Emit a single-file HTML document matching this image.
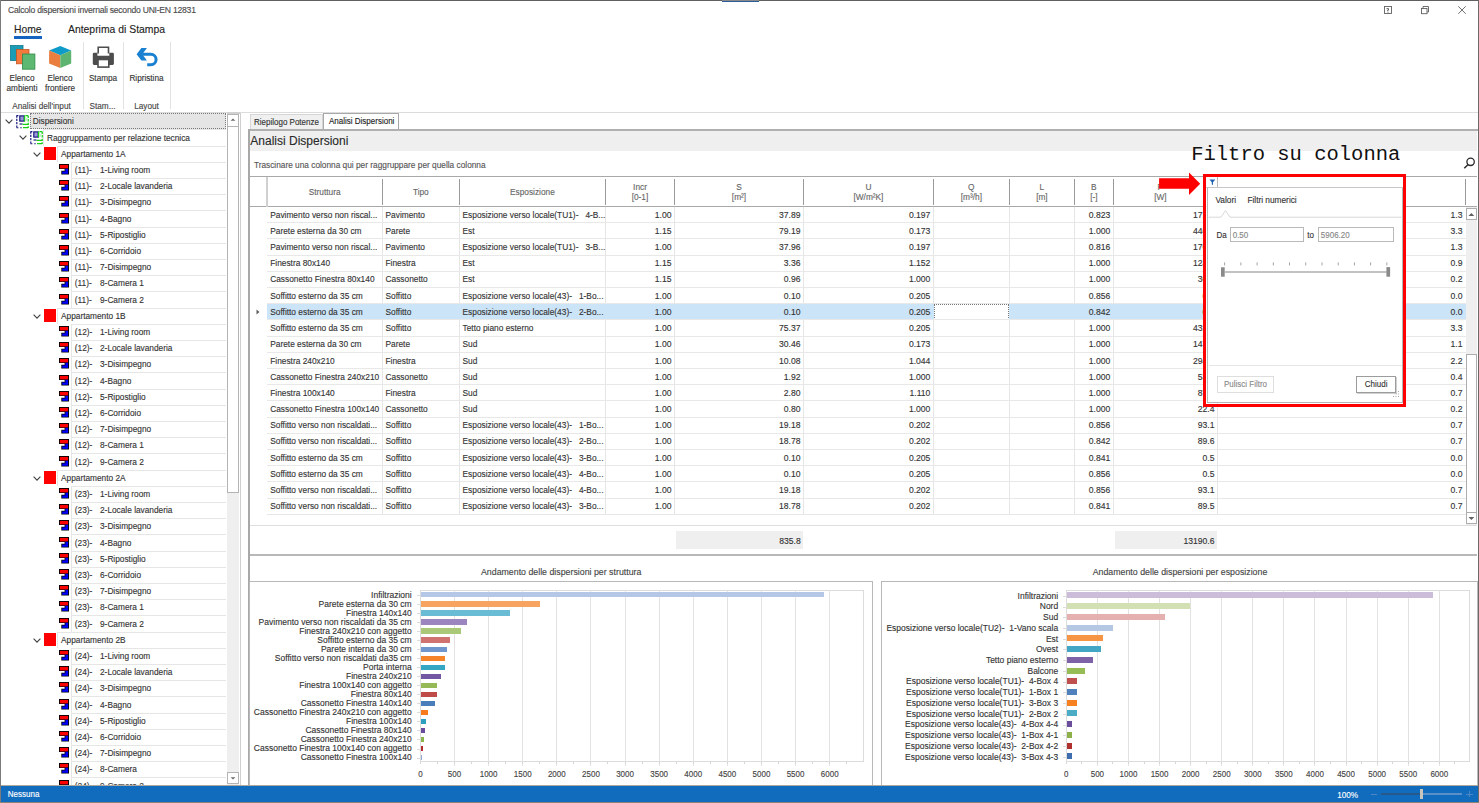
<!DOCTYPE html>
<html><head><meta charset="utf-8"><style>
html,body{margin:0;padding:0;}
body{width:1479px;height:803px;position:relative;overflow:hidden;background:#fff;font-family:"Liberation Sans",sans-serif;}
div{position:absolute;}
.t{white-space:pre;-webkit-text-stroke:0.12px currentColor;}
</style></head><body>
<div style="left:0px;top:0px;width:1479px;height:1px;background:#5f5f5f"></div>
<div style="left:0px;top:0px;width:1px;height:803px;background:#7b7b7b"></div>
<div style="left:1478px;top:0px;width:1px;height:803px;background:#6a6a6a"></div>
<div style="left:0px;top:802px;width:1479px;height:1px;background:#8d8478"></div>
<div style="left:722px;top:0px;width:37px;height:1px;background:#8a8a8a"></div>
<div style="left:722px;top:1px;width:37px;height:1px;background:#2b5d9b"></div>
<div class="t" style="left:8px;top:5px;font-size:8.6px;line-height:10.75px;color:#4a4a4a;font-family:'Liberation Sans';letter-spacing:-0.24px;transform:scaleY(1.1);transform-origin:0 8px;">Calcolo dispersioni invernali secondo UNI-EN 12831</div>
<svg style="position:absolute;left:0;top:0" width="1479" height="20"><rect x="1384.5" y="6.5" width="7" height="7" fill="none" stroke="#606060" stroke-width="0.9"/><path d="M386.5 8.6 h2 v1.6 h-1 v1" transform="translate(1000,0)" fill="none" stroke="#555" stroke-width="0.9"/><rect x="1387.6" y="11.8" width="0.9" height="0.9" fill="#555"/><rect x="1421.5" y="8.5" width="5.5" height="5.2" fill="none" stroke="#606060" stroke-width="0.9"/><path d="M1423 8.5 V6.5 H1428.5 V12 H1427" fill="none" stroke="#606060" stroke-width="0.9"/><path d="M1458.3 6.3 L1465.7 13.8 M1465.7 6.3 L1458.3 13.8" stroke="#606060" stroke-width="0.9"/></svg>
<div class="t" style="left:14px;top:24px;font-size:10.3px;line-height:12.88px;color:#222;font-family:'Liberation Sans';">Home</div>
<div style="left:14px;top:36px;width:28px;height:3px;background:#1565c0"></div>
<div class="t" style="left:68px;top:23px;font-size:10.4px;line-height:13.0px;color:#222;font-family:'Liberation Sans';">Anteprima di Stampa</div>
<svg style="position:absolute;left:0;top:0" width="180" height="75"><rect x="10.5" y="45.5" width="12.5" height="15" fill="#1b9cb6" stroke="#15798f" stroke-width="0.8"/><rect x="16.5" y="49.5" width="12.5" height="14.3" fill="#f47b3d" stroke="#c9561f" stroke-width="0.8"/><rect x="22.5" y="54" width="12.4" height="15.2" fill="#5db971" stroke="#2f8a4a" stroke-width="0.8"/><polygon points="60.3,46.1 71.2,50.6 60.3,55.2 49.1,50.6" fill="#0f9bc9"/><polygon points="49.1,50.6 60.3,55.2 60.3,68.1 49.1,63.6" fill="#e97e3e"/><polygon points="71.2,50.6 60.3,55.2 60.3,68.1 71.2,63.6" fill="#5db470"/><path d="M98.2 53.5 V47.3 H108.5 V53.5" fill="none" stroke="#4d4d4d" stroke-width="1.6"/><path d="M94 52.7 H97.4 V55.7 H109.3 V52.7 H112.7 Q113.9 52.7 113.9 54 V63.6 Q113.9 64.9 112.7 64.9 H94 Q92.8 64.9 92.8 63.6 V54 Q92.8 52.7 94 52.7 Z" fill="#4d4d4d"/><rect x="98" y="59.5" width="10.8" height="7.6" fill="#fff" stroke="#4d4d4d" stroke-width="1.6"/><polygon points="136.6,54.2 141.4,48.1 146.9,48.1 142.3,54.2 146.9,60.6 141.4,60.6" fill="#1a80d0"/><path d="M140 54.2 H150.8 A5.3 5.3 0 0 1 150.8 64.8 H147.2" fill="none" stroke="#1a80d0" stroke-width="3"/></svg>
<div class="t" style="left:-8.0px;width:60px;text-align:center;top:74px;font-size:8.2px;line-height:10.25px;color:#333;font-family:'Liberation Sans';transform:scaleY(1.1);transform-origin:0 7px;">Elenco</div>
<div class="t" style="left:-8.0px;width:60px;text-align:center;top:84px;font-size:8.2px;line-height:10.25px;color:#333;font-family:'Liberation Sans';transform:scaleY(1.1);transform-origin:0 7px;">ambienti</div>
<div class="t" style="left:30.0px;width:60px;text-align:center;top:74px;font-size:8.2px;line-height:10.25px;color:#333;font-family:'Liberation Sans';transform:scaleY(1.1);transform-origin:0 7px;">Elenco</div>
<div class="t" style="left:30.0px;width:60px;text-align:center;top:84px;font-size:8.2px;line-height:10.25px;color:#333;font-family:'Liberation Sans';transform:scaleY(1.1);transform-origin:0 7px;">frontiere</div>
<div class="t" style="left:73.0px;width:60px;text-align:center;top:74px;font-size:8.2px;line-height:10.25px;color:#333;font-family:'Liberation Sans';transform:scaleY(1.1);transform-origin:0 7px;">Stampa</div>
<div class="t" style="left:116.5px;width:60px;text-align:center;top:74px;font-size:8.2px;line-height:10.25px;color:#333;font-family:'Liberation Sans';transform:scaleY(1.1);transform-origin:0 7px;">Ripristina</div>
<div class="t" style="left:-8.5px;width:100px;text-align:center;top:102px;font-size:8.2px;line-height:10.25px;color:#444;font-family:'Liberation Sans';transform:scaleY(1.1);transform-origin:0 7px;">Analisi dell'input</div>
<div class="t" style="left:72.5px;width:60px;text-align:center;top:102px;font-size:8.2px;line-height:10.25px;color:#444;font-family:'Liberation Sans';transform:scaleY(1.1);transform-origin:0 7px;">Stam...</div>
<div class="t" style="left:116.5px;width:60px;text-align:center;top:102px;font-size:8.2px;line-height:10.25px;color:#444;font-family:'Liberation Sans';transform:scaleY(1.1);transform-origin:0 7px;">Layout</div>
<div style="left:83px;top:42px;width:1px;height:67px;background:#e2e2e2"></div>
<div style="left:123px;top:42px;width:1px;height:67px;background:#e2e2e2"></div>
<div style="left:170px;top:42px;width:1px;height:67px;background:#e2e2e2"></div>
<div style="left:1px;top:112px;width:1477px;height:1px;background:#dcdcdc"></div>
<div style="left:1px;top:113px;width:226px;height:672px;overflow:hidden">
<svg style="position:absolute;left:3.8px;top:6.2px" width="9" height="6"><path d="M0.6 0.6 L4 4.2 L7.4 0.6" fill="none" stroke="#404040" stroke-width="1.1"/></svg>
<svg style="position:absolute;left:15px;top:2.2px" width="14" height="14"><path d="M0.8 0.5 V13" stroke="#1b1b80" stroke-width="1.2" stroke-dasharray="2.2 1.1"/><path d="M0.5 0.6 H2.4 M0.5 12.7 H2.4" stroke="#1b1b80" stroke-width="1.1"/><rect x="3.8" y="0.9" width="4.4" height="5.2" fill="#9a9ad8" stroke="#1b1b80" stroke-width="1.2"/><path d="M3.5 9 H6.5" stroke="#1b1b80" stroke-width="1.2"/><path d="M4 12.7 H6" stroke="#5050a0" stroke-width="1.1"/><path d="M8.6 0.5 V6.5" stroke="#16d016" stroke-width="1.3"/><path d="M12.2 0.5 V13" stroke="#16d016" stroke-width="1.3" stroke-dasharray="2.4 1.2"/><path d="M9.5 0.6 H12 M6.5 9.3 H12 M7 12.7 H12" stroke="#16d016" stroke-width="1.2"/><rect x="9.5" y="3" width="2" height="3" fill="#c8f0c8"/></svg>
<div style="left:29px;top:0.2px;width:196px;height:15.5px;background:#e5e5e5;border:1px dotted #7a7a7a;box-sizing:border-box"></div>
<div class="t" style="left:31.7px;top:3px;font-size:8.3px;line-height:10.38px;color:#333;font-family:'Liberation Sans';transform:scaleY(1.1);transform-origin:0 8px;">Dispersioni</div>
<div style="left:42px;top:16.4px;width:183px;height:16.2px;border-top:1px solid #e6e6e6;border-left:1px solid #e6e6e6;box-sizing:border-box"></div>
<svg style="position:absolute;left:17.7px;top:22.4px" width="9" height="6"><path d="M0.6 0.6 L4 4.2 L7.4 0.6" fill="none" stroke="#404040" stroke-width="1.1"/></svg>
<svg style="position:absolute;left:29px;top:18.4px" width="14" height="14"><path d="M0.8 0.5 V13" stroke="#1b1b80" stroke-width="1.2" stroke-dasharray="2.2 1.1"/><path d="M0.5 0.6 H2.4 M0.5 12.7 H2.4" stroke="#1b1b80" stroke-width="1.1"/><rect x="3.8" y="0.9" width="4.4" height="5.2" fill="#9a9ad8" stroke="#1b1b80" stroke-width="1.2"/><path d="M3.5 9 H6.5" stroke="#1b1b80" stroke-width="1.2"/><path d="M4 12.7 H6" stroke="#5050a0" stroke-width="1.1"/><path d="M8.6 0.5 V6.5" stroke="#16d016" stroke-width="1.3"/><path d="M12.2 0.5 V13" stroke="#16d016" stroke-width="1.3" stroke-dasharray="2.4 1.2"/><path d="M9.5 0.6 H12 M6.5 9.3 H12 M7 12.7 H12" stroke="#16d016" stroke-width="1.2"/><rect x="9.5" y="3" width="2" height="3" fill="#c8f0c8"/></svg>
<div class="t" style="left:46px;top:20px;font-size:8.3px;line-height:10.38px;color:#333;font-family:'Liberation Sans';transform:scaleY(1.1);transform-origin:0 8px;">Raggruppamento per relazione tecnica</div>
<div style="left:56px;top:32.6px;width:169px;height:16.2px;border-top:1px solid #e6e6e6;border-left:1px solid #e6e6e6;box-sizing:border-box"></div>
<svg style="position:absolute;left:31.7px;top:38.6px" width="9" height="6"><path d="M0.6 0.6 L4 4.2 L7.4 0.6" fill="none" stroke="#404040" stroke-width="1.1"/></svg>
<div style="left:43px;top:34.2px;width:12px;height:13px;background:#ff0000"></div>
<div class="t" style="left:60px;top:36px;font-size:8.3px;line-height:10.38px;color:#333;font-family:'Liberation Sans';transform:scaleY(1.1);transform-origin:0 8px;">Appartamento 1A</div>
<div style="left:70.4px;top:48.8px;width:154.6px;height:16.2px;border-top:1px solid #e6e6e6;border-left:1px solid #e6e6e6;box-sizing:border-box"></div>
<svg style="position:absolute;left:58px;top:51.0px" width="12" height="12"><path d="M0 0 H10 V10.6 H2.3 V6.8 H5.6 V4.9 H0 Z" fill="#000"/><rect x="0.9" y="0.9" width="8.2" height="3.5" fill="#ff0000"/><rect x="6.4" y="4.8" width="2.7" height="3" fill="#0000ff"/><rect x="3.2" y="7.5" width="5.9" height="2.3" fill="#0000ff"/></svg>
<div class="t" style="left:73.8px;top:52px;font-size:8.3px;line-height:10.38px;color:#333;font-family:'Liberation Sans';transform:scaleY(1.1);transform-origin:0 8px;">(11)-</div>
<div class="t" style="left:99px;top:52px;font-size:8.3px;line-height:10.38px;color:#333;font-family:'Liberation Sans';transform:scaleY(1.1);transform-origin:0 8px;">1-Living room</div>
<div style="left:70.4px;top:65.0px;width:154.6px;height:16.2px;border-top:1px solid #e6e6e6;border-left:1px solid #e6e6e6;box-sizing:border-box"></div>
<svg style="position:absolute;left:58px;top:67.2px" width="12" height="12"><path d="M0 0 H10 V10.6 H2.3 V6.8 H5.6 V4.9 H0 Z" fill="#000"/><rect x="0.9" y="0.9" width="8.2" height="3.5" fill="#ff0000"/><rect x="6.4" y="4.8" width="2.7" height="3" fill="#0000ff"/><rect x="3.2" y="7.5" width="5.9" height="2.3" fill="#0000ff"/></svg>
<div class="t" style="left:73.8px;top:68px;font-size:8.3px;line-height:10.38px;color:#333;font-family:'Liberation Sans';transform:scaleY(1.1);transform-origin:0 8px;">(11)-</div>
<div class="t" style="left:99px;top:68px;font-size:8.3px;line-height:10.38px;color:#333;font-family:'Liberation Sans';transform:scaleY(1.1);transform-origin:0 8px;">2-Locale lavanderia</div>
<div style="left:70.4px;top:81.2px;width:154.6px;height:16.2px;border-top:1px solid #e6e6e6;border-left:1px solid #e6e6e6;box-sizing:border-box"></div>
<svg style="position:absolute;left:58px;top:83.4px" width="12" height="12"><path d="M0 0 H10 V10.6 H2.3 V6.8 H5.6 V4.9 H0 Z" fill="#000"/><rect x="0.9" y="0.9" width="8.2" height="3.5" fill="#ff0000"/><rect x="6.4" y="4.8" width="2.7" height="3" fill="#0000ff"/><rect x="3.2" y="7.5" width="5.9" height="2.3" fill="#0000ff"/></svg>
<div class="t" style="left:73.8px;top:84px;font-size:8.3px;line-height:10.38px;color:#333;font-family:'Liberation Sans';transform:scaleY(1.1);transform-origin:0 8px;">(11)-</div>
<div class="t" style="left:99px;top:84px;font-size:8.3px;line-height:10.38px;color:#333;font-family:'Liberation Sans';transform:scaleY(1.1);transform-origin:0 8px;">3-Disimpegno</div>
<div style="left:70.4px;top:97.4px;width:154.6px;height:16.2px;border-top:1px solid #e6e6e6;border-left:1px solid #e6e6e6;box-sizing:border-box"></div>
<svg style="position:absolute;left:58px;top:99.6px" width="12" height="12"><path d="M0 0 H10 V10.6 H2.3 V6.8 H5.6 V4.9 H0 Z" fill="#000"/><rect x="0.9" y="0.9" width="8.2" height="3.5" fill="#ff0000"/><rect x="6.4" y="4.8" width="2.7" height="3" fill="#0000ff"/><rect x="3.2" y="7.5" width="5.9" height="2.3" fill="#0000ff"/></svg>
<div class="t" style="left:73.8px;top:101px;font-size:8.3px;line-height:10.38px;color:#333;font-family:'Liberation Sans';transform:scaleY(1.1);transform-origin:0 8px;">(11)-</div>
<div class="t" style="left:99px;top:101px;font-size:8.3px;line-height:10.38px;color:#333;font-family:'Liberation Sans';transform:scaleY(1.1);transform-origin:0 8px;">4-Bagno</div>
<div style="left:70.4px;top:113.6px;width:154.6px;height:16.2px;border-top:1px solid #e6e6e6;border-left:1px solid #e6e6e6;box-sizing:border-box"></div>
<svg style="position:absolute;left:58px;top:115.8px" width="12" height="12"><path d="M0 0 H10 V10.6 H2.3 V6.8 H5.6 V4.9 H0 Z" fill="#000"/><rect x="0.9" y="0.9" width="8.2" height="3.5" fill="#ff0000"/><rect x="6.4" y="4.8" width="2.7" height="3" fill="#0000ff"/><rect x="3.2" y="7.5" width="5.9" height="2.3" fill="#0000ff"/></svg>
<div class="t" style="left:73.8px;top:117px;font-size:8.3px;line-height:10.38px;color:#333;font-family:'Liberation Sans';transform:scaleY(1.1);transform-origin:0 8px;">(11)-</div>
<div class="t" style="left:99px;top:117px;font-size:8.3px;line-height:10.38px;color:#333;font-family:'Liberation Sans';transform:scaleY(1.1);transform-origin:0 8px;">5-Ripostiglio</div>
<div style="left:70.4px;top:129.8px;width:154.6px;height:16.2px;border-top:1px solid #e6e6e6;border-left:1px solid #e6e6e6;box-sizing:border-box"></div>
<svg style="position:absolute;left:58px;top:132.0px" width="12" height="12"><path d="M0 0 H10 V10.6 H2.3 V6.8 H5.6 V4.9 H0 Z" fill="#000"/><rect x="0.9" y="0.9" width="8.2" height="3.5" fill="#ff0000"/><rect x="6.4" y="4.8" width="2.7" height="3" fill="#0000ff"/><rect x="3.2" y="7.5" width="5.9" height="2.3" fill="#0000ff"/></svg>
<div class="t" style="left:73.8px;top:133px;font-size:8.3px;line-height:10.38px;color:#333;font-family:'Liberation Sans';transform:scaleY(1.1);transform-origin:0 8px;">(11)-</div>
<div class="t" style="left:99px;top:133px;font-size:8.3px;line-height:10.38px;color:#333;font-family:'Liberation Sans';transform:scaleY(1.1);transform-origin:0 8px;">6-Corridoio</div>
<div style="left:70.4px;top:146.0px;width:154.6px;height:16.2px;border-top:1px solid #e6e6e6;border-left:1px solid #e6e6e6;box-sizing:border-box"></div>
<svg style="position:absolute;left:58px;top:148.2px" width="12" height="12"><path d="M0 0 H10 V10.6 H2.3 V6.8 H5.6 V4.9 H0 Z" fill="#000"/><rect x="0.9" y="0.9" width="8.2" height="3.5" fill="#ff0000"/><rect x="6.4" y="4.8" width="2.7" height="3" fill="#0000ff"/><rect x="3.2" y="7.5" width="5.9" height="2.3" fill="#0000ff"/></svg>
<div class="t" style="left:73.8px;top:149px;font-size:8.3px;line-height:10.38px;color:#333;font-family:'Liberation Sans';transform:scaleY(1.1);transform-origin:0 8px;">(11)-</div>
<div class="t" style="left:99px;top:149px;font-size:8.3px;line-height:10.38px;color:#333;font-family:'Liberation Sans';transform:scaleY(1.1);transform-origin:0 8px;">7-Disimpegno</div>
<div style="left:70.4px;top:162.2px;width:154.6px;height:16.2px;border-top:1px solid #e6e6e6;border-left:1px solid #e6e6e6;box-sizing:border-box"></div>
<svg style="position:absolute;left:58px;top:164.4px" width="12" height="12"><path d="M0 0 H10 V10.6 H2.3 V6.8 H5.6 V4.9 H0 Z" fill="#000"/><rect x="0.9" y="0.9" width="8.2" height="3.5" fill="#ff0000"/><rect x="6.4" y="4.8" width="2.7" height="3" fill="#0000ff"/><rect x="3.2" y="7.5" width="5.9" height="2.3" fill="#0000ff"/></svg>
<div class="t" style="left:73.8px;top:165px;font-size:8.3px;line-height:10.38px;color:#333;font-family:'Liberation Sans';transform:scaleY(1.1);transform-origin:0 8px;">(11)-</div>
<div class="t" style="left:99px;top:165px;font-size:8.3px;line-height:10.38px;color:#333;font-family:'Liberation Sans';transform:scaleY(1.1);transform-origin:0 8px;">8-Camera 1</div>
<div style="left:70.4px;top:178.4px;width:154.6px;height:16.2px;border-top:1px solid #e6e6e6;border-left:1px solid #e6e6e6;box-sizing:border-box"></div>
<svg style="position:absolute;left:58px;top:180.6px" width="12" height="12"><path d="M0 0 H10 V10.6 H2.3 V6.8 H5.6 V4.9 H0 Z" fill="#000"/><rect x="0.9" y="0.9" width="8.2" height="3.5" fill="#ff0000"/><rect x="6.4" y="4.8" width="2.7" height="3" fill="#0000ff"/><rect x="3.2" y="7.5" width="5.9" height="2.3" fill="#0000ff"/></svg>
<div class="t" style="left:73.8px;top:182px;font-size:8.3px;line-height:10.38px;color:#333;font-family:'Liberation Sans';transform:scaleY(1.1);transform-origin:0 8px;">(11)-</div>
<div class="t" style="left:99px;top:182px;font-size:8.3px;line-height:10.38px;color:#333;font-family:'Liberation Sans';transform:scaleY(1.1);transform-origin:0 8px;">9-Camera 2</div>
<div style="left:56px;top:194.6px;width:169px;height:16.2px;border-top:1px solid #e6e6e6;border-left:1px solid #e6e6e6;box-sizing:border-box"></div>
<svg style="position:absolute;left:31.7px;top:200.6px" width="9" height="6"><path d="M0.6 0.6 L4 4.2 L7.4 0.6" fill="none" stroke="#404040" stroke-width="1.1"/></svg>
<div style="left:43px;top:196.2px;width:12px;height:13px;background:#ff0000"></div>
<div class="t" style="left:60px;top:198px;font-size:8.3px;line-height:10.38px;color:#333;font-family:'Liberation Sans';transform:scaleY(1.1);transform-origin:0 8px;">Appartamento 1B</div>
<div style="left:70.4px;top:210.8px;width:154.6px;height:16.2px;border-top:1px solid #e6e6e6;border-left:1px solid #e6e6e6;box-sizing:border-box"></div>
<svg style="position:absolute;left:58px;top:213.0px" width="12" height="12"><path d="M0 0 H10 V10.6 H2.3 V6.8 H5.6 V4.9 H0 Z" fill="#000"/><rect x="0.9" y="0.9" width="8.2" height="3.5" fill="#ff0000"/><rect x="6.4" y="4.8" width="2.7" height="3" fill="#0000ff"/><rect x="3.2" y="7.5" width="5.9" height="2.3" fill="#0000ff"/></svg>
<div class="t" style="left:73.8px;top:214px;font-size:8.3px;line-height:10.38px;color:#333;font-family:'Liberation Sans';transform:scaleY(1.1);transform-origin:0 8px;">(12)-</div>
<div class="t" style="left:99px;top:214px;font-size:8.3px;line-height:10.38px;color:#333;font-family:'Liberation Sans';transform:scaleY(1.1);transform-origin:0 8px;">1-Living room</div>
<div style="left:70.4px;top:227.0px;width:154.6px;height:16.2px;border-top:1px solid #e6e6e6;border-left:1px solid #e6e6e6;box-sizing:border-box"></div>
<svg style="position:absolute;left:58px;top:229.2px" width="12" height="12"><path d="M0 0 H10 V10.6 H2.3 V6.8 H5.6 V4.9 H0 Z" fill="#000"/><rect x="0.9" y="0.9" width="8.2" height="3.5" fill="#ff0000"/><rect x="6.4" y="4.8" width="2.7" height="3" fill="#0000ff"/><rect x="3.2" y="7.5" width="5.9" height="2.3" fill="#0000ff"/></svg>
<div class="t" style="left:73.8px;top:230px;font-size:8.3px;line-height:10.38px;color:#333;font-family:'Liberation Sans';transform:scaleY(1.1);transform-origin:0 8px;">(12)-</div>
<div class="t" style="left:99px;top:230px;font-size:8.3px;line-height:10.38px;color:#333;font-family:'Liberation Sans';transform:scaleY(1.1);transform-origin:0 8px;">2-Locale lavanderia</div>
<div style="left:70.4px;top:243.2px;width:154.6px;height:16.2px;border-top:1px solid #e6e6e6;border-left:1px solid #e6e6e6;box-sizing:border-box"></div>
<svg style="position:absolute;left:58px;top:245.4px" width="12" height="12"><path d="M0 0 H10 V10.6 H2.3 V6.8 H5.6 V4.9 H0 Z" fill="#000"/><rect x="0.9" y="0.9" width="8.2" height="3.5" fill="#ff0000"/><rect x="6.4" y="4.8" width="2.7" height="3" fill="#0000ff"/><rect x="3.2" y="7.5" width="5.9" height="2.3" fill="#0000ff"/></svg>
<div class="t" style="left:73.8px;top:246px;font-size:8.3px;line-height:10.38px;color:#333;font-family:'Liberation Sans';transform:scaleY(1.1);transform-origin:0 8px;">(12)-</div>
<div class="t" style="left:99px;top:246px;font-size:8.3px;line-height:10.38px;color:#333;font-family:'Liberation Sans';transform:scaleY(1.1);transform-origin:0 8px;">3-Disimpegno</div>
<div style="left:70.4px;top:259.4px;width:154.6px;height:16.2px;border-top:1px solid #e6e6e6;border-left:1px solid #e6e6e6;box-sizing:border-box"></div>
<svg style="position:absolute;left:58px;top:261.6px" width="12" height="12"><path d="M0 0 H10 V10.6 H2.3 V6.8 H5.6 V4.9 H0 Z" fill="#000"/><rect x="0.9" y="0.9" width="8.2" height="3.5" fill="#ff0000"/><rect x="6.4" y="4.8" width="2.7" height="3" fill="#0000ff"/><rect x="3.2" y="7.5" width="5.9" height="2.3" fill="#0000ff"/></svg>
<div class="t" style="left:73.8px;top:263px;font-size:8.3px;line-height:10.38px;color:#333;font-family:'Liberation Sans';transform:scaleY(1.1);transform-origin:0 8px;">(12)-</div>
<div class="t" style="left:99px;top:263px;font-size:8.3px;line-height:10.38px;color:#333;font-family:'Liberation Sans';transform:scaleY(1.1);transform-origin:0 8px;">4-Bagno</div>
<div style="left:70.4px;top:275.6px;width:154.6px;height:16.2px;border-top:1px solid #e6e6e6;border-left:1px solid #e6e6e6;box-sizing:border-box"></div>
<svg style="position:absolute;left:58px;top:277.8px" width="12" height="12"><path d="M0 0 H10 V10.6 H2.3 V6.8 H5.6 V4.9 H0 Z" fill="#000"/><rect x="0.9" y="0.9" width="8.2" height="3.5" fill="#ff0000"/><rect x="6.4" y="4.8" width="2.7" height="3" fill="#0000ff"/><rect x="3.2" y="7.5" width="5.9" height="2.3" fill="#0000ff"/></svg>
<div class="t" style="left:73.8px;top:279px;font-size:8.3px;line-height:10.38px;color:#333;font-family:'Liberation Sans';transform:scaleY(1.1);transform-origin:0 8px;">(12)-</div>
<div class="t" style="left:99px;top:279px;font-size:8.3px;line-height:10.38px;color:#333;font-family:'Liberation Sans';transform:scaleY(1.1);transform-origin:0 8px;">5-Ripostiglio</div>
<div style="left:70.4px;top:291.8px;width:154.6px;height:16.2px;border-top:1px solid #e6e6e6;border-left:1px solid #e6e6e6;box-sizing:border-box"></div>
<svg style="position:absolute;left:58px;top:294.0px" width="12" height="12"><path d="M0 0 H10 V10.6 H2.3 V6.8 H5.6 V4.9 H0 Z" fill="#000"/><rect x="0.9" y="0.9" width="8.2" height="3.5" fill="#ff0000"/><rect x="6.4" y="4.8" width="2.7" height="3" fill="#0000ff"/><rect x="3.2" y="7.5" width="5.9" height="2.3" fill="#0000ff"/></svg>
<div class="t" style="left:73.8px;top:295px;font-size:8.3px;line-height:10.38px;color:#333;font-family:'Liberation Sans';transform:scaleY(1.1);transform-origin:0 8px;">(12)-</div>
<div class="t" style="left:99px;top:295px;font-size:8.3px;line-height:10.38px;color:#333;font-family:'Liberation Sans';transform:scaleY(1.1);transform-origin:0 8px;">6-Corridoio</div>
<div style="left:70.4px;top:308.0px;width:154.6px;height:16.2px;border-top:1px solid #e6e6e6;border-left:1px solid #e6e6e6;box-sizing:border-box"></div>
<svg style="position:absolute;left:58px;top:310.2px" width="12" height="12"><path d="M0 0 H10 V10.6 H2.3 V6.8 H5.6 V4.9 H0 Z" fill="#000"/><rect x="0.9" y="0.9" width="8.2" height="3.5" fill="#ff0000"/><rect x="6.4" y="4.8" width="2.7" height="3" fill="#0000ff"/><rect x="3.2" y="7.5" width="5.9" height="2.3" fill="#0000ff"/></svg>
<div class="t" style="left:73.8px;top:311px;font-size:8.3px;line-height:10.38px;color:#333;font-family:'Liberation Sans';transform:scaleY(1.1);transform-origin:0 8px;">(12)-</div>
<div class="t" style="left:99px;top:311px;font-size:8.3px;line-height:10.38px;color:#333;font-family:'Liberation Sans';transform:scaleY(1.1);transform-origin:0 8px;">7-Disimpegno</div>
<div style="left:70.4px;top:324.2px;width:154.6px;height:16.2px;border-top:1px solid #e6e6e6;border-left:1px solid #e6e6e6;box-sizing:border-box"></div>
<svg style="position:absolute;left:58px;top:326.4px" width="12" height="12"><path d="M0 0 H10 V10.6 H2.3 V6.8 H5.6 V4.9 H0 Z" fill="#000"/><rect x="0.9" y="0.9" width="8.2" height="3.5" fill="#ff0000"/><rect x="6.4" y="4.8" width="2.7" height="3" fill="#0000ff"/><rect x="3.2" y="7.5" width="5.9" height="2.3" fill="#0000ff"/></svg>
<div class="t" style="left:73.8px;top:327px;font-size:8.3px;line-height:10.38px;color:#333;font-family:'Liberation Sans';transform:scaleY(1.1);transform-origin:0 8px;">(12)-</div>
<div class="t" style="left:99px;top:327px;font-size:8.3px;line-height:10.38px;color:#333;font-family:'Liberation Sans';transform:scaleY(1.1);transform-origin:0 8px;">8-Camera 1</div>
<div style="left:70.4px;top:340.4px;width:154.6px;height:16.2px;border-top:1px solid #e6e6e6;border-left:1px solid #e6e6e6;box-sizing:border-box"></div>
<svg style="position:absolute;left:58px;top:342.6px" width="12" height="12"><path d="M0 0 H10 V10.6 H2.3 V6.8 H5.6 V4.9 H0 Z" fill="#000"/><rect x="0.9" y="0.9" width="8.2" height="3.5" fill="#ff0000"/><rect x="6.4" y="4.8" width="2.7" height="3" fill="#0000ff"/><rect x="3.2" y="7.5" width="5.9" height="2.3" fill="#0000ff"/></svg>
<div class="t" style="left:73.8px;top:344px;font-size:8.3px;line-height:10.38px;color:#333;font-family:'Liberation Sans';transform:scaleY(1.1);transform-origin:0 8px;">(12)-</div>
<div class="t" style="left:99px;top:344px;font-size:8.3px;line-height:10.38px;color:#333;font-family:'Liberation Sans';transform:scaleY(1.1);transform-origin:0 8px;">9-Camera 2</div>
<div style="left:56px;top:356.6px;width:169px;height:16.2px;border-top:1px solid #e6e6e6;border-left:1px solid #e6e6e6;box-sizing:border-box"></div>
<svg style="position:absolute;left:31.7px;top:362.6px" width="9" height="6"><path d="M0.6 0.6 L4 4.2 L7.4 0.6" fill="none" stroke="#404040" stroke-width="1.1"/></svg>
<div style="left:43px;top:358.2px;width:12px;height:13px;background:#ff0000"></div>
<div class="t" style="left:60px;top:360px;font-size:8.3px;line-height:10.38px;color:#333;font-family:'Liberation Sans';transform:scaleY(1.1);transform-origin:0 8px;">Appartamento 2A</div>
<div style="left:70.4px;top:372.8px;width:154.6px;height:16.2px;border-top:1px solid #e6e6e6;border-left:1px solid #e6e6e6;box-sizing:border-box"></div>
<svg style="position:absolute;left:58px;top:375.0px" width="12" height="12"><path d="M0 0 H10 V10.6 H2.3 V6.8 H5.6 V4.9 H0 Z" fill="#000"/><rect x="0.9" y="0.9" width="8.2" height="3.5" fill="#ff0000"/><rect x="6.4" y="4.8" width="2.7" height="3" fill="#0000ff"/><rect x="3.2" y="7.5" width="5.9" height="2.3" fill="#0000ff"/></svg>
<div class="t" style="left:73.8px;top:376px;font-size:8.3px;line-height:10.38px;color:#333;font-family:'Liberation Sans';transform:scaleY(1.1);transform-origin:0 8px;">(23)-</div>
<div class="t" style="left:99px;top:376px;font-size:8.3px;line-height:10.38px;color:#333;font-family:'Liberation Sans';transform:scaleY(1.1);transform-origin:0 8px;">1-Living room</div>
<div style="left:70.4px;top:389.0px;width:154.6px;height:16.2px;border-top:1px solid #e6e6e6;border-left:1px solid #e6e6e6;box-sizing:border-box"></div>
<svg style="position:absolute;left:58px;top:391.2px" width="12" height="12"><path d="M0 0 H10 V10.6 H2.3 V6.8 H5.6 V4.9 H0 Z" fill="#000"/><rect x="0.9" y="0.9" width="8.2" height="3.5" fill="#ff0000"/><rect x="6.4" y="4.8" width="2.7" height="3" fill="#0000ff"/><rect x="3.2" y="7.5" width="5.9" height="2.3" fill="#0000ff"/></svg>
<div class="t" style="left:73.8px;top:392px;font-size:8.3px;line-height:10.38px;color:#333;font-family:'Liberation Sans';transform:scaleY(1.1);transform-origin:0 8px;">(23)-</div>
<div class="t" style="left:99px;top:392px;font-size:8.3px;line-height:10.38px;color:#333;font-family:'Liberation Sans';transform:scaleY(1.1);transform-origin:0 8px;">2-Locale lavanderia</div>
<div style="left:70.4px;top:405.2px;width:154.6px;height:16.2px;border-top:1px solid #e6e6e6;border-left:1px solid #e6e6e6;box-sizing:border-box"></div>
<svg style="position:absolute;left:58px;top:407.4px" width="12" height="12"><path d="M0 0 H10 V10.6 H2.3 V6.8 H5.6 V4.9 H0 Z" fill="#000"/><rect x="0.9" y="0.9" width="8.2" height="3.5" fill="#ff0000"/><rect x="6.4" y="4.8" width="2.7" height="3" fill="#0000ff"/><rect x="3.2" y="7.5" width="5.9" height="2.3" fill="#0000ff"/></svg>
<div class="t" style="left:73.8px;top:408px;font-size:8.3px;line-height:10.38px;color:#333;font-family:'Liberation Sans';transform:scaleY(1.1);transform-origin:0 8px;">(23)-</div>
<div class="t" style="left:99px;top:408px;font-size:8.3px;line-height:10.38px;color:#333;font-family:'Liberation Sans';transform:scaleY(1.1);transform-origin:0 8px;">3-Disimpegno</div>
<div style="left:70.4px;top:421.4px;width:154.6px;height:16.2px;border-top:1px solid #e6e6e6;border-left:1px solid #e6e6e6;box-sizing:border-box"></div>
<svg style="position:absolute;left:58px;top:423.6px" width="12" height="12"><path d="M0 0 H10 V10.6 H2.3 V6.8 H5.6 V4.9 H0 Z" fill="#000"/><rect x="0.9" y="0.9" width="8.2" height="3.5" fill="#ff0000"/><rect x="6.4" y="4.8" width="2.7" height="3" fill="#0000ff"/><rect x="3.2" y="7.5" width="5.9" height="2.3" fill="#0000ff"/></svg>
<div class="t" style="left:73.8px;top:425px;font-size:8.3px;line-height:10.38px;color:#333;font-family:'Liberation Sans';transform:scaleY(1.1);transform-origin:0 8px;">(23)-</div>
<div class="t" style="left:99px;top:425px;font-size:8.3px;line-height:10.38px;color:#333;font-family:'Liberation Sans';transform:scaleY(1.1);transform-origin:0 8px;">4-Bagno</div>
<div style="left:70.4px;top:437.6px;width:154.6px;height:16.2px;border-top:1px solid #e6e6e6;border-left:1px solid #e6e6e6;box-sizing:border-box"></div>
<svg style="position:absolute;left:58px;top:439.8px" width="12" height="12"><path d="M0 0 H10 V10.6 H2.3 V6.8 H5.6 V4.9 H0 Z" fill="#000"/><rect x="0.9" y="0.9" width="8.2" height="3.5" fill="#ff0000"/><rect x="6.4" y="4.8" width="2.7" height="3" fill="#0000ff"/><rect x="3.2" y="7.5" width="5.9" height="2.3" fill="#0000ff"/></svg>
<div class="t" style="left:73.8px;top:441px;font-size:8.3px;line-height:10.38px;color:#333;font-family:'Liberation Sans';transform:scaleY(1.1);transform-origin:0 8px;">(23)-</div>
<div class="t" style="left:99px;top:441px;font-size:8.3px;line-height:10.38px;color:#333;font-family:'Liberation Sans';transform:scaleY(1.1);transform-origin:0 8px;">5-Ripostiglio</div>
<div style="left:70.4px;top:453.8px;width:154.6px;height:16.2px;border-top:1px solid #e6e6e6;border-left:1px solid #e6e6e6;box-sizing:border-box"></div>
<svg style="position:absolute;left:58px;top:456.0px" width="12" height="12"><path d="M0 0 H10 V10.6 H2.3 V6.8 H5.6 V4.9 H0 Z" fill="#000"/><rect x="0.9" y="0.9" width="8.2" height="3.5" fill="#ff0000"/><rect x="6.4" y="4.8" width="2.7" height="3" fill="#0000ff"/><rect x="3.2" y="7.5" width="5.9" height="2.3" fill="#0000ff"/></svg>
<div class="t" style="left:73.8px;top:457px;font-size:8.3px;line-height:10.38px;color:#333;font-family:'Liberation Sans';transform:scaleY(1.1);transform-origin:0 8px;">(23)-</div>
<div class="t" style="left:99px;top:457px;font-size:8.3px;line-height:10.38px;color:#333;font-family:'Liberation Sans';transform:scaleY(1.1);transform-origin:0 8px;">6-Corridoio</div>
<div style="left:70.4px;top:470.0px;width:154.6px;height:16.2px;border-top:1px solid #e6e6e6;border-left:1px solid #e6e6e6;box-sizing:border-box"></div>
<svg style="position:absolute;left:58px;top:472.2px" width="12" height="12"><path d="M0 0 H10 V10.6 H2.3 V6.8 H5.6 V4.9 H0 Z" fill="#000"/><rect x="0.9" y="0.9" width="8.2" height="3.5" fill="#ff0000"/><rect x="6.4" y="4.8" width="2.7" height="3" fill="#0000ff"/><rect x="3.2" y="7.5" width="5.9" height="2.3" fill="#0000ff"/></svg>
<div class="t" style="left:73.8px;top:473px;font-size:8.3px;line-height:10.38px;color:#333;font-family:'Liberation Sans';transform:scaleY(1.1);transform-origin:0 8px;">(23)-</div>
<div class="t" style="left:99px;top:473px;font-size:8.3px;line-height:10.38px;color:#333;font-family:'Liberation Sans';transform:scaleY(1.1);transform-origin:0 8px;">7-Disimpegno</div>
<div style="left:70.4px;top:486.2px;width:154.6px;height:16.2px;border-top:1px solid #e6e6e6;border-left:1px solid #e6e6e6;box-sizing:border-box"></div>
<svg style="position:absolute;left:58px;top:488.4px" width="12" height="12"><path d="M0 0 H10 V10.6 H2.3 V6.8 H5.6 V4.9 H0 Z" fill="#000"/><rect x="0.9" y="0.9" width="8.2" height="3.5" fill="#ff0000"/><rect x="6.4" y="4.8" width="2.7" height="3" fill="#0000ff"/><rect x="3.2" y="7.5" width="5.9" height="2.3" fill="#0000ff"/></svg>
<div class="t" style="left:73.8px;top:489px;font-size:8.3px;line-height:10.38px;color:#333;font-family:'Liberation Sans';transform:scaleY(1.1);transform-origin:0 8px;">(23)-</div>
<div class="t" style="left:99px;top:489px;font-size:8.3px;line-height:10.38px;color:#333;font-family:'Liberation Sans';transform:scaleY(1.1);transform-origin:0 8px;">8-Camera 1</div>
<div style="left:70.4px;top:502.4px;width:154.6px;height:16.2px;border-top:1px solid #e6e6e6;border-left:1px solid #e6e6e6;box-sizing:border-box"></div>
<svg style="position:absolute;left:58px;top:504.6px" width="12" height="12"><path d="M0 0 H10 V10.6 H2.3 V6.8 H5.6 V4.9 H0 Z" fill="#000"/><rect x="0.9" y="0.9" width="8.2" height="3.5" fill="#ff0000"/><rect x="6.4" y="4.8" width="2.7" height="3" fill="#0000ff"/><rect x="3.2" y="7.5" width="5.9" height="2.3" fill="#0000ff"/></svg>
<div class="t" style="left:73.8px;top:506px;font-size:8.3px;line-height:10.38px;color:#333;font-family:'Liberation Sans';transform:scaleY(1.1);transform-origin:0 8px;">(23)-</div>
<div class="t" style="left:99px;top:506px;font-size:8.3px;line-height:10.38px;color:#333;font-family:'Liberation Sans';transform:scaleY(1.1);transform-origin:0 8px;">9-Camera 2</div>
<div style="left:56px;top:518.6px;width:169px;height:16.2px;border-top:1px solid #e6e6e6;border-left:1px solid #e6e6e6;box-sizing:border-box"></div>
<svg style="position:absolute;left:31.7px;top:524.6px" width="9" height="6"><path d="M0.6 0.6 L4 4.2 L7.4 0.6" fill="none" stroke="#404040" stroke-width="1.1"/></svg>
<div style="left:43px;top:520.2px;width:12px;height:13px;background:#ff0000"></div>
<div class="t" style="left:60px;top:522px;font-size:8.3px;line-height:10.38px;color:#333;font-family:'Liberation Sans';transform:scaleY(1.1);transform-origin:0 8px;">Appartamento 2B</div>
<div style="left:70.4px;top:534.8px;width:154.6px;height:16.2px;border-top:1px solid #e6e6e6;border-left:1px solid #e6e6e6;box-sizing:border-box"></div>
<svg style="position:absolute;left:58px;top:537.0px" width="12" height="12"><path d="M0 0 H10 V10.6 H2.3 V6.8 H5.6 V4.9 H0 Z" fill="#000"/><rect x="0.9" y="0.9" width="8.2" height="3.5" fill="#ff0000"/><rect x="6.4" y="4.8" width="2.7" height="3" fill="#0000ff"/><rect x="3.2" y="7.5" width="5.9" height="2.3" fill="#0000ff"/></svg>
<div class="t" style="left:73.8px;top:538px;font-size:8.3px;line-height:10.38px;color:#333;font-family:'Liberation Sans';transform:scaleY(1.1);transform-origin:0 8px;">(24)-</div>
<div class="t" style="left:99px;top:538px;font-size:8.3px;line-height:10.38px;color:#333;font-family:'Liberation Sans';transform:scaleY(1.1);transform-origin:0 8px;">1-Living room</div>
<div style="left:70.4px;top:551.0px;width:154.6px;height:16.2px;border-top:1px solid #e6e6e6;border-left:1px solid #e6e6e6;box-sizing:border-box"></div>
<svg style="position:absolute;left:58px;top:553.2px" width="12" height="12"><path d="M0 0 H10 V10.6 H2.3 V6.8 H5.6 V4.9 H0 Z" fill="#000"/><rect x="0.9" y="0.9" width="8.2" height="3.5" fill="#ff0000"/><rect x="6.4" y="4.8" width="2.7" height="3" fill="#0000ff"/><rect x="3.2" y="7.5" width="5.9" height="2.3" fill="#0000ff"/></svg>
<div class="t" style="left:73.8px;top:554px;font-size:8.3px;line-height:10.38px;color:#333;font-family:'Liberation Sans';transform:scaleY(1.1);transform-origin:0 8px;">(24)-</div>
<div class="t" style="left:99px;top:554px;font-size:8.3px;line-height:10.38px;color:#333;font-family:'Liberation Sans';transform:scaleY(1.1);transform-origin:0 8px;">2-Locale lavanderia</div>
<div style="left:70.4px;top:567.2px;width:154.6px;height:16.2px;border-top:1px solid #e6e6e6;border-left:1px solid #e6e6e6;box-sizing:border-box"></div>
<svg style="position:absolute;left:58px;top:569.4px" width="12" height="12"><path d="M0 0 H10 V10.6 H2.3 V6.8 H5.6 V4.9 H0 Z" fill="#000"/><rect x="0.9" y="0.9" width="8.2" height="3.5" fill="#ff0000"/><rect x="6.4" y="4.8" width="2.7" height="3" fill="#0000ff"/><rect x="3.2" y="7.5" width="5.9" height="2.3" fill="#0000ff"/></svg>
<div class="t" style="left:73.8px;top:570px;font-size:8.3px;line-height:10.38px;color:#333;font-family:'Liberation Sans';transform:scaleY(1.1);transform-origin:0 8px;">(24)-</div>
<div class="t" style="left:99px;top:570px;font-size:8.3px;line-height:10.38px;color:#333;font-family:'Liberation Sans';transform:scaleY(1.1);transform-origin:0 8px;">3-Disimpegno</div>
<div style="left:70.4px;top:583.4px;width:154.6px;height:16.2px;border-top:1px solid #e6e6e6;border-left:1px solid #e6e6e6;box-sizing:border-box"></div>
<svg style="position:absolute;left:58px;top:585.6px" width="12" height="12"><path d="M0 0 H10 V10.6 H2.3 V6.8 H5.6 V4.9 H0 Z" fill="#000"/><rect x="0.9" y="0.9" width="8.2" height="3.5" fill="#ff0000"/><rect x="6.4" y="4.8" width="2.7" height="3" fill="#0000ff"/><rect x="3.2" y="7.5" width="5.9" height="2.3" fill="#0000ff"/></svg>
<div class="t" style="left:73.8px;top:587px;font-size:8.3px;line-height:10.38px;color:#333;font-family:'Liberation Sans';transform:scaleY(1.1);transform-origin:0 8px;">(24)-</div>
<div class="t" style="left:99px;top:587px;font-size:8.3px;line-height:10.38px;color:#333;font-family:'Liberation Sans';transform:scaleY(1.1);transform-origin:0 8px;">4-Bagno</div>
<div style="left:70.4px;top:599.6px;width:154.6px;height:16.2px;border-top:1px solid #e6e6e6;border-left:1px solid #e6e6e6;box-sizing:border-box"></div>
<svg style="position:absolute;left:58px;top:601.8px" width="12" height="12"><path d="M0 0 H10 V10.6 H2.3 V6.8 H5.6 V4.9 H0 Z" fill="#000"/><rect x="0.9" y="0.9" width="8.2" height="3.5" fill="#ff0000"/><rect x="6.4" y="4.8" width="2.7" height="3" fill="#0000ff"/><rect x="3.2" y="7.5" width="5.9" height="2.3" fill="#0000ff"/></svg>
<div class="t" style="left:73.8px;top:603px;font-size:8.3px;line-height:10.38px;color:#333;font-family:'Liberation Sans';transform:scaleY(1.1);transform-origin:0 8px;">(24)-</div>
<div class="t" style="left:99px;top:603px;font-size:8.3px;line-height:10.38px;color:#333;font-family:'Liberation Sans';transform:scaleY(1.1);transform-origin:0 8px;">5-Ripostiglio</div>
<div style="left:70.4px;top:615.8px;width:154.6px;height:16.2px;border-top:1px solid #e6e6e6;border-left:1px solid #e6e6e6;box-sizing:border-box"></div>
<svg style="position:absolute;left:58px;top:618.0px" width="12" height="12"><path d="M0 0 H10 V10.6 H2.3 V6.8 H5.6 V4.9 H0 Z" fill="#000"/><rect x="0.9" y="0.9" width="8.2" height="3.5" fill="#ff0000"/><rect x="6.4" y="4.8" width="2.7" height="3" fill="#0000ff"/><rect x="3.2" y="7.5" width="5.9" height="2.3" fill="#0000ff"/></svg>
<div class="t" style="left:73.8px;top:619px;font-size:8.3px;line-height:10.38px;color:#333;font-family:'Liberation Sans';transform:scaleY(1.1);transform-origin:0 8px;">(24)-</div>
<div class="t" style="left:99px;top:619px;font-size:8.3px;line-height:10.38px;color:#333;font-family:'Liberation Sans';transform:scaleY(1.1);transform-origin:0 8px;">6-Corridoio</div>
<div style="left:70.4px;top:632.0px;width:154.6px;height:16.2px;border-top:1px solid #e6e6e6;border-left:1px solid #e6e6e6;box-sizing:border-box"></div>
<svg style="position:absolute;left:58px;top:634.2px" width="12" height="12"><path d="M0 0 H10 V10.6 H2.3 V6.8 H5.6 V4.9 H0 Z" fill="#000"/><rect x="0.9" y="0.9" width="8.2" height="3.5" fill="#ff0000"/><rect x="6.4" y="4.8" width="2.7" height="3" fill="#0000ff"/><rect x="3.2" y="7.5" width="5.9" height="2.3" fill="#0000ff"/></svg>
<div class="t" style="left:73.8px;top:635px;font-size:8.3px;line-height:10.38px;color:#333;font-family:'Liberation Sans';transform:scaleY(1.1);transform-origin:0 8px;">(24)-</div>
<div class="t" style="left:99px;top:635px;font-size:8.3px;line-height:10.38px;color:#333;font-family:'Liberation Sans';transform:scaleY(1.1);transform-origin:0 8px;">7-Disimpegno</div>
<div style="left:70.4px;top:648.2px;width:154.6px;height:16.2px;border-top:1px solid #e6e6e6;border-left:1px solid #e6e6e6;box-sizing:border-box"></div>
<svg style="position:absolute;left:58px;top:650.4px" width="12" height="12"><path d="M0 0 H10 V10.6 H2.3 V6.8 H5.6 V4.9 H0 Z" fill="#000"/><rect x="0.9" y="0.9" width="8.2" height="3.5" fill="#ff0000"/><rect x="6.4" y="4.8" width="2.7" height="3" fill="#0000ff"/><rect x="3.2" y="7.5" width="5.9" height="2.3" fill="#0000ff"/></svg>
<div class="t" style="left:73.8px;top:651px;font-size:8.3px;line-height:10.38px;color:#333;font-family:'Liberation Sans';transform:scaleY(1.1);transform-origin:0 8px;">(24)-</div>
<div class="t" style="left:99px;top:651px;font-size:8.3px;line-height:10.38px;color:#333;font-family:'Liberation Sans';transform:scaleY(1.1);transform-origin:0 8px;">8-Camera</div>
<div style="left:70.4px;top:664.4px;width:154.6px;height:16.2px;border-top:1px solid #e6e6e6;border-left:1px solid #e6e6e6;box-sizing:border-box"></div>
<svg style="position:absolute;left:58px;top:666.6px" width="12" height="12"><path d="M0 0 H10 V10.6 H2.3 V6.8 H5.6 V4.9 H0 Z" fill="#000"/><rect x="0.9" y="0.9" width="8.2" height="3.5" fill="#ff0000"/><rect x="6.4" y="4.8" width="2.7" height="3" fill="#0000ff"/><rect x="3.2" y="7.5" width="5.9" height="2.3" fill="#0000ff"/></svg>
<div class="t" style="left:73.8px;top:668px;font-size:8.3px;line-height:10.38px;color:#333;font-family:'Liberation Sans';transform:scaleY(1.1);transform-origin:0 8px;">(24)-</div>
<div class="t" style="left:99px;top:668px;font-size:8.3px;line-height:10.38px;color:#333;font-family:'Liberation Sans';transform:scaleY(1.1);transform-origin:0 8px;">9-Camera 2</div>
</div>
<div style="left:227px;top:113px;width:12px;height:672px;background:#efefef"></div>
<div style="left:227px;top:114px;width:12px;height:13px;background:#fff;border:1px solid #b4b4b4;box-sizing:border-box"></div>
<div style="left:227px;top:126px;width:12px;height:367.3px;background:#fff;border:1px solid #b4b4b4;box-sizing:border-box"></div>
<div style="left:227px;top:772.2px;width:12px;height:11.8px;background:#fff;border:1px solid #b4b4b4;box-sizing:border-box"></div>
<svg style="position:absolute;left:227px;top:113px" width="12" height="672"><polygon points="3.6,7.8 6,5.4 8.4,7.8" fill="#6a6a6a"/><polygon points="3.6,664.2 8.4,664.2 6,666.6" fill="#6a6a6a"/></svg>
<div style="left:239.5px;top:113px;width:1px;height:672px;background:#cfcfcf"></div>
<div style="left:227px;top:112px;width:13px;height:2px;background:#d0d0d0"></div>
<div style="left:250px;top:114px;width:73.3px;height:15.3px;background:#f0f0f0;border:1px solid #d6d6d6;border-bottom:none;box-sizing:border-box"></div>
<div class="t" style="left:254px;top:118px;font-size:8px;line-height:10.0px;color:#333;font-family:'Liberation Sans';transform:scaleY(1.1);transform-origin:0 7px;">Riepilogo Potenze</div>
<div style="left:323.3px;top:113px;width:76.2px;height:17px;background:#fff;border:1px solid #a8a8a8;border-bottom:none;box-sizing:border-box"></div>
<div class="t" style="left:329px;top:117px;font-size:8px;line-height:10.0px;color:#222;font-family:'Liberation Sans';transform:scaleY(1.1);transform-origin:0 7px;">Analisi Dispersioni</div>
<div style="left:248px;top:129.3px;width:1231px;height:2px;background:#b0b0b0"></div>
<div style="left:248px;top:129.3px;width:2px;height:656px;background:#a8a8a8"></div>
<div style="left:1477.5px;top:129.3px;width:1.5px;height:657px;background:#707070"></div>
<div style="left:250px;top:131.3px;width:1227px;height:19.3px;background:#efefef"></div>
<div class="t" style="left:250.3px;top:134px;font-size:12px;line-height:15.0px;color:#2a2a2a;font-family:'Liberation Sans';">Analisi Dispersioni</div>
<div class="t" style="left:253.9px;top:160px;font-size:8.3px;line-height:10.38px;color:#555;font-family:'Liberation Sans';transform:scaleY(1.1);transform-origin:0 8px;">Trascinare una colonna qui per raggruppare per quella colonna</div>
<svg style="position:absolute;left:1460px;top:155px" width="18" height="18"><circle cx="10.6" cy="6.8" r="3.7" fill="none" stroke="#2a2a2a" stroke-width="1.3"/><path d="M8.1 9.5 L4.3 13.2" stroke="#2a2a2a" stroke-width="1.5"/></svg>
<div style="left:250px;top:176px;width:1227px;height:1px;background:#a9a9a9"></div>
<div style="left:250px;top:206px;width:1227px;height:1.3px;background:#a9a9a9"></div>
<div style="left:266.3px;top:177px;width:1.4px;height:30px;background:#d0d0d0"></div>
<div style="left:381.8px;top:178.5px;width:1px;height:26px;background:#9a9a9a"></div>
<div class="t" style="left:224.65px;width:200px;text-align:center;top:187px;font-size:8.3px;line-height:10.38px;color:#666;font-family:'Liberation Sans';transform:scaleY(1.1);transform-origin:0 8px;">Struttura</div>
<div style="left:458.8px;top:178.5px;width:1px;height:26px;background:#9a9a9a"></div>
<div class="t" style="left:320.8px;width:200px;text-align:center;top:187px;font-size:8.3px;line-height:10.38px;color:#666;font-family:'Liberation Sans';transform:scaleY(1.1);transform-origin:0 8px;">Tipo</div>
<div style="left:605.0px;top:178.5px;width:1px;height:26px;background:#9a9a9a"></div>
<div class="t" style="left:432.4px;width:200px;text-align:center;top:187px;font-size:8.3px;line-height:10.38px;color:#666;font-family:'Liberation Sans';transform:scaleY(1.1);transform-origin:0 8px;">Esposizione</div>
<div style="left:674.0px;top:178.5px;width:1px;height:26px;background:#9a9a9a"></div>
<div class="t" style="left:540.0px;width:200px;text-align:center;top:182px;font-size:8.3px;line-height:10.38px;color:#666;font-family:'Liberation Sans';transform:scaleY(1.1);transform-origin:0 8px;">Incr</div>
<div class="t" style="left:540.0px;width:200px;text-align:center;top:192px;font-size:8.3px;line-height:10.38px;color:#666;font-family:'Liberation Sans';transform:scaleY(1.1);transform-origin:0 8px;">[0-1]</div>
<div style="left:803.0px;top:178.5px;width:1px;height:26px;background:#9a9a9a"></div>
<div class="t" style="left:639.0px;width:200px;text-align:center;top:182px;font-size:8.3px;line-height:10.38px;color:#666;font-family:'Liberation Sans';transform:scaleY(1.1);transform-origin:0 8px;">S</div>
<div class="t" style="left:639.0px;width:200px;text-align:center;top:192px;font-size:8.3px;line-height:10.38px;color:#666;font-family:'Liberation Sans';transform:scaleY(1.1);transform-origin:0 8px;">[m²]</div>
<div style="left:932.9px;top:178.5px;width:1px;height:26px;background:#9a9a9a"></div>
<div class="t" style="left:768.45px;width:200px;text-align:center;top:182px;font-size:8.3px;line-height:10.38px;color:#666;font-family:'Liberation Sans';transform:scaleY(1.1);transform-origin:0 8px;">U</div>
<div class="t" style="left:768.45px;width:200px;text-align:center;top:192px;font-size:8.3px;line-height:10.38px;color:#666;font-family:'Liberation Sans';transform:scaleY(1.1);transform-origin:0 8px;">[W/m²K]</div>
<div style="left:1008.8px;top:178.5px;width:1px;height:26px;background:#9a9a9a"></div>
<div class="t" style="left:871.35px;width:200px;text-align:center;top:182px;font-size:8.3px;line-height:10.38px;color:#666;font-family:'Liberation Sans';transform:scaleY(1.1);transform-origin:0 8px;">Q</div>
<div class="t" style="left:871.35px;width:200px;text-align:center;top:192px;font-size:8.3px;line-height:10.38px;color:#666;font-family:'Liberation Sans';transform:scaleY(1.1);transform-origin:0 8px;">[m³/h]</div>
<div style="left:1074.0px;top:178.5px;width:1px;height:26px;background:#9a9a9a"></div>
<div class="t" style="left:941.9px;width:200px;text-align:center;top:182px;font-size:8.3px;line-height:10.38px;color:#666;font-family:'Liberation Sans';transform:scaleY(1.1);transform-origin:0 8px;">L</div>
<div class="t" style="left:941.9px;width:200px;text-align:center;top:192px;font-size:8.3px;line-height:10.38px;color:#666;font-family:'Liberation Sans';transform:scaleY(1.1);transform-origin:0 8px;">[m]</div>
<div style="left:1112.8px;top:178.5px;width:1px;height:26px;background:#9a9a9a"></div>
<div class="t" style="left:993.9px;width:200px;text-align:center;top:182px;font-size:8.3px;line-height:10.38px;color:#666;font-family:'Liberation Sans';transform:scaleY(1.1);transform-origin:0 8px;">B</div>
<div class="t" style="left:993.9px;width:200px;text-align:center;top:192px;font-size:8.3px;line-height:10.38px;color:#666;font-family:'Liberation Sans';transform:scaleY(1.1);transform-origin:0 8px;">[-]</div>
<div style="left:1217.0px;top:178.5px;width:1px;height:26px;background:#9a9a9a"></div>
<div class="t" style="left:1060.4px;width:200px;text-align:center;top:182px;font-size:8.3px;line-height:10.38px;color:#666;font-family:'Liberation Sans';transform:scaleY(1.1);transform-origin:0 8px;">P</div>
<div class="t" style="left:1060.4px;width:200px;text-align:center;top:192px;font-size:8.3px;line-height:10.38px;color:#666;font-family:'Liberation Sans';transform:scaleY(1.1);transform-origin:0 8px;">[W]</div>
<div style="left:1465.0px;top:178.5px;width:1px;height:26px;background:#9a9a9a"></div>
<div class="t" style="left:1241.5px;width:200px;text-align:center;top:187px;font-size:8.3px;line-height:10.38px;color:#666;font-family:'Liberation Sans';transform:scaleY(1.1);transform-origin:0 8px;"></div>
<div style="left:381.8px;top:207.3px;width:1px;height:307px;background:#e6e6e6"></div>
<div style="left:458.8px;top:207.3px;width:1px;height:307px;background:#e6e6e6"></div>
<div style="left:605.0px;top:207.3px;width:1px;height:307px;background:#e6e6e6"></div>
<div style="left:674.0px;top:207.3px;width:1px;height:307px;background:#e6e6e6"></div>
<div style="left:803.0px;top:207.3px;width:1px;height:307px;background:#e6e6e6"></div>
<div style="left:932.9px;top:207.3px;width:1px;height:307px;background:#e6e6e6"></div>
<div style="left:1008.8px;top:207.3px;width:1px;height:307px;background:#e6e6e6"></div>
<div style="left:1074.0px;top:207.3px;width:1px;height:307px;background:#e6e6e6"></div>
<div style="left:1112.8px;top:207.3px;width:1px;height:307px;background:#e6e6e6"></div>
<div style="left:1217.0px;top:207.3px;width:1px;height:307px;background:#e6e6e6"></div>
<div style="left:267px;top:222.2px;width:1198.5px;height:1px;background:#e8e8e8"></div>
<div class="t" style="left:270.2px;top:210px;font-size:8.35px;line-height:10.44px;color:#333;font-family:'Liberation Sans';transform:scaleY(1.1);transform-origin:0 8px;">Pavimento verso non riscal...</div>
<div class="t" style="left:385.5px;top:210px;font-size:8.35px;line-height:10.44px;color:#333;font-family:'Liberation Sans';transform:scaleY(1.1);transform-origin:0 8px;">Pavimento</div>
<div class="t" style="left:462.5px;top:210px;font-size:8.35px;line-height:10.44px;color:#333;font-family:'Liberation Sans';transform:scaleY(1.1);transform-origin:0 8px;">Esposizione verso locale(TU1)-&nbsp;&nbsp; 4-B...</div>
<div class="t" style="left:551.5px;width:120px;text-align:right;top:210px;font-size:8.6px;line-height:10.75px;color:#333;font-family:'Liberation Sans';transform:scaleY(1.1);transform-origin:0 8px;">1.00</div>
<div class="t" style="left:680.5px;width:120px;text-align:right;top:210px;font-size:8.6px;line-height:10.75px;color:#333;font-family:'Liberation Sans';transform:scaleY(1.1);transform-origin:0 8px;">37.89</div>
<div class="t" style="left:810.4px;width:120px;text-align:right;top:210px;font-size:8.6px;line-height:10.75px;color:#333;font-family:'Liberation Sans';transform:scaleY(1.1);transform-origin:0 8px;">0.197</div>
<div class="t" style="left:990.3px;width:120px;text-align:right;top:210px;font-size:8.6px;line-height:10.75px;color:#333;font-family:'Liberation Sans';transform:scaleY(1.1);transform-origin:0 8px;">0.823</div>
<div class="t" style="left:1094.5px;width:120px;text-align:right;top:210px;font-size:8.6px;line-height:10.75px;color:#333;font-family:'Liberation Sans';transform:scaleY(1.1);transform-origin:0 8px;">171.6</div>
<div class="t" style="left:1342.5px;width:120px;text-align:right;top:210px;font-size:8.6px;line-height:10.75px;color:#333;font-family:'Liberation Sans';transform:scaleY(1.1);transform-origin:0 8px;">1.3</div>
<div style="left:267px;top:238.4px;width:1198.5px;height:1px;background:#e8e8e8"></div>
<div class="t" style="left:270.2px;top:226px;font-size:8.35px;line-height:10.44px;color:#333;font-family:'Liberation Sans';transform:scaleY(1.1);transform-origin:0 8px;">Parete esterna da 30 cm</div>
<div class="t" style="left:385.5px;top:226px;font-size:8.35px;line-height:10.44px;color:#333;font-family:'Liberation Sans';transform:scaleY(1.1);transform-origin:0 8px;">Parete</div>
<div class="t" style="left:462.5px;top:226px;font-size:8.35px;line-height:10.44px;color:#333;font-family:'Liberation Sans';transform:scaleY(1.1);transform-origin:0 8px;">Est</div>
<div class="t" style="left:551.5px;width:120px;text-align:right;top:226px;font-size:8.6px;line-height:10.75px;color:#333;font-family:'Liberation Sans';transform:scaleY(1.1);transform-origin:0 8px;">1.15</div>
<div class="t" style="left:680.5px;width:120px;text-align:right;top:226px;font-size:8.6px;line-height:10.75px;color:#333;font-family:'Liberation Sans';transform:scaleY(1.1);transform-origin:0 8px;">79.19</div>
<div class="t" style="left:810.4px;width:120px;text-align:right;top:226px;font-size:8.6px;line-height:10.75px;color:#333;font-family:'Liberation Sans';transform:scaleY(1.1);transform-origin:0 8px;">0.173</div>
<div class="t" style="left:990.3px;width:120px;text-align:right;top:226px;font-size:8.6px;line-height:10.75px;color:#333;font-family:'Liberation Sans';transform:scaleY(1.1);transform-origin:0 8px;">1.000</div>
<div class="t" style="left:1094.5px;width:120px;text-align:right;top:226px;font-size:8.6px;line-height:10.75px;color:#333;font-family:'Liberation Sans';transform:scaleY(1.1);transform-origin:0 8px;">440.6</div>
<div class="t" style="left:1342.5px;width:120px;text-align:right;top:226px;font-size:8.6px;line-height:10.75px;color:#333;font-family:'Liberation Sans';transform:scaleY(1.1);transform-origin:0 8px;">3.3</div>
<div style="left:267px;top:254.6px;width:1198.5px;height:1px;background:#e8e8e8"></div>
<div class="t" style="left:270.2px;top:242px;font-size:8.35px;line-height:10.44px;color:#333;font-family:'Liberation Sans';transform:scaleY(1.1);transform-origin:0 8px;">Pavimento verso non riscal...</div>
<div class="t" style="left:385.5px;top:242px;font-size:8.35px;line-height:10.44px;color:#333;font-family:'Liberation Sans';transform:scaleY(1.1);transform-origin:0 8px;">Pavimento</div>
<div class="t" style="left:462.5px;top:242px;font-size:8.35px;line-height:10.44px;color:#333;font-family:'Liberation Sans';transform:scaleY(1.1);transform-origin:0 8px;">Esposizione verso locale(TU1)-&nbsp;&nbsp; 3-B...</div>
<div class="t" style="left:551.5px;width:120px;text-align:right;top:242px;font-size:8.6px;line-height:10.75px;color:#333;font-family:'Liberation Sans';transform:scaleY(1.1);transform-origin:0 8px;">1.00</div>
<div class="t" style="left:680.5px;width:120px;text-align:right;top:242px;font-size:8.6px;line-height:10.75px;color:#333;font-family:'Liberation Sans';transform:scaleY(1.1);transform-origin:0 8px;">37.96</div>
<div class="t" style="left:810.4px;width:120px;text-align:right;top:242px;font-size:8.6px;line-height:10.75px;color:#333;font-family:'Liberation Sans';transform:scaleY(1.1);transform-origin:0 8px;">0.197</div>
<div class="t" style="left:990.3px;width:120px;text-align:right;top:242px;font-size:8.6px;line-height:10.75px;color:#333;font-family:'Liberation Sans';transform:scaleY(1.1);transform-origin:0 8px;">0.816</div>
<div class="t" style="left:1094.5px;width:120px;text-align:right;top:242px;font-size:8.6px;line-height:10.75px;color:#333;font-family:'Liberation Sans';transform:scaleY(1.1);transform-origin:0 8px;">170.3</div>
<div class="t" style="left:1342.5px;width:120px;text-align:right;top:242px;font-size:8.6px;line-height:10.75px;color:#333;font-family:'Liberation Sans';transform:scaleY(1.1);transform-origin:0 8px;">1.3</div>
<div style="left:267px;top:270.8px;width:1198.5px;height:1px;background:#e8e8e8"></div>
<div class="t" style="left:270.2px;top:258px;font-size:8.35px;line-height:10.44px;color:#333;font-family:'Liberation Sans';transform:scaleY(1.1);transform-origin:0 8px;">Finestra 80x140</div>
<div class="t" style="left:385.5px;top:258px;font-size:8.35px;line-height:10.44px;color:#333;font-family:'Liberation Sans';transform:scaleY(1.1);transform-origin:0 8px;">Finestra</div>
<div class="t" style="left:462.5px;top:258px;font-size:8.35px;line-height:10.44px;color:#333;font-family:'Liberation Sans';transform:scaleY(1.1);transform-origin:0 8px;">Est</div>
<div class="t" style="left:551.5px;width:120px;text-align:right;top:258px;font-size:8.6px;line-height:10.75px;color:#333;font-family:'Liberation Sans';transform:scaleY(1.1);transform-origin:0 8px;">1.15</div>
<div class="t" style="left:680.5px;width:120px;text-align:right;top:258px;font-size:8.6px;line-height:10.75px;color:#333;font-family:'Liberation Sans';transform:scaleY(1.1);transform-origin:0 8px;">3.36</div>
<div class="t" style="left:810.4px;width:120px;text-align:right;top:258px;font-size:8.6px;line-height:10.75px;color:#333;font-family:'Liberation Sans';transform:scaleY(1.1);transform-origin:0 8px;">1.152</div>
<div class="t" style="left:990.3px;width:120px;text-align:right;top:258px;font-size:8.6px;line-height:10.75px;color:#333;font-family:'Liberation Sans';transform:scaleY(1.1);transform-origin:0 8px;">1.000</div>
<div class="t" style="left:1094.5px;width:120px;text-align:right;top:258px;font-size:8.6px;line-height:10.75px;color:#333;font-family:'Liberation Sans';transform:scaleY(1.1);transform-origin:0 8px;">124.5</div>
<div class="t" style="left:1342.5px;width:120px;text-align:right;top:258px;font-size:8.6px;line-height:10.75px;color:#333;font-family:'Liberation Sans';transform:scaleY(1.1);transform-origin:0 8px;">0.9</div>
<div style="left:267px;top:287.0px;width:1198.5px;height:1px;background:#e8e8e8"></div>
<div class="t" style="left:270.2px;top:274px;font-size:8.35px;line-height:10.44px;color:#333;font-family:'Liberation Sans';transform:scaleY(1.1);transform-origin:0 8px;">Cassonetto Finestra 80x140</div>
<div class="t" style="left:385.5px;top:274px;font-size:8.35px;line-height:10.44px;color:#333;font-family:'Liberation Sans';transform:scaleY(1.1);transform-origin:0 8px;">Cassonetto</div>
<div class="t" style="left:462.5px;top:274px;font-size:8.35px;line-height:10.44px;color:#333;font-family:'Liberation Sans';transform:scaleY(1.1);transform-origin:0 8px;">Est</div>
<div class="t" style="left:551.5px;width:120px;text-align:right;top:274px;font-size:8.6px;line-height:10.75px;color:#333;font-family:'Liberation Sans';transform:scaleY(1.1);transform-origin:0 8px;">1.15</div>
<div class="t" style="left:680.5px;width:120px;text-align:right;top:274px;font-size:8.6px;line-height:10.75px;color:#333;font-family:'Liberation Sans';transform:scaleY(1.1);transform-origin:0 8px;">0.96</div>
<div class="t" style="left:810.4px;width:120px;text-align:right;top:274px;font-size:8.6px;line-height:10.75px;color:#333;font-family:'Liberation Sans';transform:scaleY(1.1);transform-origin:0 8px;">1.000</div>
<div class="t" style="left:990.3px;width:120px;text-align:right;top:274px;font-size:8.6px;line-height:10.75px;color:#333;font-family:'Liberation Sans';transform:scaleY(1.1);transform-origin:0 8px;">1.000</div>
<div class="t" style="left:1094.5px;width:120px;text-align:right;top:274px;font-size:8.6px;line-height:10.75px;color:#333;font-family:'Liberation Sans';transform:scaleY(1.1);transform-origin:0 8px;">30.6</div>
<div class="t" style="left:1342.5px;width:120px;text-align:right;top:274px;font-size:8.6px;line-height:10.75px;color:#333;font-family:'Liberation Sans';transform:scaleY(1.1);transform-origin:0 8px;">0.2</div>
<div style="left:267px;top:303.2px;width:1198.5px;height:1px;background:#e8e8e8"></div>
<div class="t" style="left:270.2px;top:291px;font-size:8.35px;line-height:10.44px;color:#333;font-family:'Liberation Sans';transform:scaleY(1.1);transform-origin:0 8px;">Soffitto esterno da 35 cm</div>
<div class="t" style="left:385.5px;top:291px;font-size:8.35px;line-height:10.44px;color:#333;font-family:'Liberation Sans';transform:scaleY(1.1);transform-origin:0 8px;">Soffitto</div>
<div class="t" style="left:462.5px;top:291px;font-size:8.35px;line-height:10.44px;color:#333;font-family:'Liberation Sans';transform:scaleY(1.1);transform-origin:0 8px;">Esposizione verso locale(43)-&nbsp;&nbsp; 1-Bo...</div>
<div class="t" style="left:551.5px;width:120px;text-align:right;top:291px;font-size:8.6px;line-height:10.75px;color:#333;font-family:'Liberation Sans';transform:scaleY(1.1);transform-origin:0 8px;">1.00</div>
<div class="t" style="left:680.5px;width:120px;text-align:right;top:291px;font-size:8.6px;line-height:10.75px;color:#333;font-family:'Liberation Sans';transform:scaleY(1.1);transform-origin:0 8px;">0.10</div>
<div class="t" style="left:810.4px;width:120px;text-align:right;top:291px;font-size:8.6px;line-height:10.75px;color:#333;font-family:'Liberation Sans';transform:scaleY(1.1);transform-origin:0 8px;">0.205</div>
<div class="t" style="left:990.3px;width:120px;text-align:right;top:291px;font-size:8.6px;line-height:10.75px;color:#333;font-family:'Liberation Sans';transform:scaleY(1.1);transform-origin:0 8px;">0.856</div>
<div class="t" style="left:1094.5px;width:120px;text-align:right;top:291px;font-size:8.6px;line-height:10.75px;color:#333;font-family:'Liberation Sans';transform:scaleY(1.1);transform-origin:0 8px;">0.5</div>
<div class="t" style="left:1342.5px;width:120px;text-align:right;top:291px;font-size:8.6px;line-height:10.75px;color:#333;font-family:'Liberation Sans';transform:scaleY(1.1);transform-origin:0 8px;">0.0</div>
<div style="left:267px;top:303.9px;width:1198.5px;height:15.8px;background:#cce4f7"></div>
<div style="left:933.6px;top:304.1px;width:75.3px;height:15.6px;background:#fff;border:1px dotted #777;box-sizing:border-box"></div>
<svg style="position:absolute;left:255px;top:307.7px" width="6" height="8"><polygon points="1.5,1.5 4.5,4 1.5,6.5" fill="#606060"/></svg>
<div style="left:267px;top:319.4px;width:1198.5px;height:1px;background:#e8e8e8"></div>
<div class="t" style="left:270.2px;top:307px;font-size:8.35px;line-height:10.44px;color:#333;font-family:'Liberation Sans';transform:scaleY(1.1);transform-origin:0 8px;">Soffitto esterno da 35 cm</div>
<div class="t" style="left:385.5px;top:307px;font-size:8.35px;line-height:10.44px;color:#333;font-family:'Liberation Sans';transform:scaleY(1.1);transform-origin:0 8px;">Soffitto</div>
<div class="t" style="left:462.5px;top:307px;font-size:8.35px;line-height:10.44px;color:#333;font-family:'Liberation Sans';transform:scaleY(1.1);transform-origin:0 8px;">Esposizione verso locale(43)-&nbsp;&nbsp; 2-Bo...</div>
<div class="t" style="left:551.5px;width:120px;text-align:right;top:307px;font-size:8.6px;line-height:10.75px;color:#333;font-family:'Liberation Sans';transform:scaleY(1.1);transform-origin:0 8px;">1.00</div>
<div class="t" style="left:680.5px;width:120px;text-align:right;top:307px;font-size:8.6px;line-height:10.75px;color:#333;font-family:'Liberation Sans';transform:scaleY(1.1);transform-origin:0 8px;">0.10</div>
<div class="t" style="left:810.4px;width:120px;text-align:right;top:307px;font-size:8.6px;line-height:10.75px;color:#333;font-family:'Liberation Sans';transform:scaleY(1.1);transform-origin:0 8px;">0.205</div>
<div class="t" style="left:990.3px;width:120px;text-align:right;top:307px;font-size:8.6px;line-height:10.75px;color:#333;font-family:'Liberation Sans';transform:scaleY(1.1);transform-origin:0 8px;">0.842</div>
<div class="t" style="left:1094.5px;width:120px;text-align:right;top:307px;font-size:8.6px;line-height:10.75px;color:#333;font-family:'Liberation Sans';transform:scaleY(1.1);transform-origin:0 8px;">0.5</div>
<div class="t" style="left:1342.5px;width:120px;text-align:right;top:307px;font-size:8.6px;line-height:10.75px;color:#333;font-family:'Liberation Sans';transform:scaleY(1.1);transform-origin:0 8px;">0.0</div>
<div style="left:267px;top:335.6px;width:1198.5px;height:1px;background:#e8e8e8"></div>
<div class="t" style="left:270.2px;top:323px;font-size:8.35px;line-height:10.44px;color:#333;font-family:'Liberation Sans';transform:scaleY(1.1);transform-origin:0 8px;">Soffitto esterno da 35 cm</div>
<div class="t" style="left:385.5px;top:323px;font-size:8.35px;line-height:10.44px;color:#333;font-family:'Liberation Sans';transform:scaleY(1.1);transform-origin:0 8px;">Soffitto</div>
<div class="t" style="left:462.5px;top:323px;font-size:8.35px;line-height:10.44px;color:#333;font-family:'Liberation Sans';transform:scaleY(1.1);transform-origin:0 8px;">Tetto piano esterno</div>
<div class="t" style="left:551.5px;width:120px;text-align:right;top:323px;font-size:8.6px;line-height:10.75px;color:#333;font-family:'Liberation Sans';transform:scaleY(1.1);transform-origin:0 8px;">1.00</div>
<div class="t" style="left:680.5px;width:120px;text-align:right;top:323px;font-size:8.6px;line-height:10.75px;color:#333;font-family:'Liberation Sans';transform:scaleY(1.1);transform-origin:0 8px;">75.37</div>
<div class="t" style="left:810.4px;width:120px;text-align:right;top:323px;font-size:8.6px;line-height:10.75px;color:#333;font-family:'Liberation Sans';transform:scaleY(1.1);transform-origin:0 8px;">0.205</div>
<div class="t" style="left:990.3px;width:120px;text-align:right;top:323px;font-size:8.6px;line-height:10.75px;color:#333;font-family:'Liberation Sans';transform:scaleY(1.1);transform-origin:0 8px;">1.000</div>
<div class="t" style="left:1094.5px;width:120px;text-align:right;top:323px;font-size:8.6px;line-height:10.75px;color:#333;font-family:'Liberation Sans';transform:scaleY(1.1);transform-origin:0 8px;">432.1</div>
<div class="t" style="left:1342.5px;width:120px;text-align:right;top:323px;font-size:8.6px;line-height:10.75px;color:#333;font-family:'Liberation Sans';transform:scaleY(1.1);transform-origin:0 8px;">3.3</div>
<div style="left:267px;top:351.8px;width:1198.5px;height:1px;background:#e8e8e8"></div>
<div class="t" style="left:270.2px;top:339px;font-size:8.35px;line-height:10.44px;color:#333;font-family:'Liberation Sans';transform:scaleY(1.1);transform-origin:0 8px;">Parete esterna da 30 cm</div>
<div class="t" style="left:385.5px;top:339px;font-size:8.35px;line-height:10.44px;color:#333;font-family:'Liberation Sans';transform:scaleY(1.1);transform-origin:0 8px;">Parete</div>
<div class="t" style="left:462.5px;top:339px;font-size:8.35px;line-height:10.44px;color:#333;font-family:'Liberation Sans';transform:scaleY(1.1);transform-origin:0 8px;">Sud</div>
<div class="t" style="left:551.5px;width:120px;text-align:right;top:339px;font-size:8.6px;line-height:10.75px;color:#333;font-family:'Liberation Sans';transform:scaleY(1.1);transform-origin:0 8px;">1.00</div>
<div class="t" style="left:680.5px;width:120px;text-align:right;top:339px;font-size:8.6px;line-height:10.75px;color:#333;font-family:'Liberation Sans';transform:scaleY(1.1);transform-origin:0 8px;">30.46</div>
<div class="t" style="left:810.4px;width:120px;text-align:right;top:339px;font-size:8.6px;line-height:10.75px;color:#333;font-family:'Liberation Sans';transform:scaleY(1.1);transform-origin:0 8px;">0.173</div>
<div class="t" style="left:990.3px;width:120px;text-align:right;top:339px;font-size:8.6px;line-height:10.75px;color:#333;font-family:'Liberation Sans';transform:scaleY(1.1);transform-origin:0 8px;">1.000</div>
<div class="t" style="left:1094.5px;width:120px;text-align:right;top:339px;font-size:8.6px;line-height:10.75px;color:#333;font-family:'Liberation Sans';transform:scaleY(1.1);transform-origin:0 8px;">147.3</div>
<div class="t" style="left:1342.5px;width:120px;text-align:right;top:339px;font-size:8.6px;line-height:10.75px;color:#333;font-family:'Liberation Sans';transform:scaleY(1.1);transform-origin:0 8px;">1.1</div>
<div style="left:267px;top:368.0px;width:1198.5px;height:1px;background:#e8e8e8"></div>
<div class="t" style="left:270.2px;top:356px;font-size:8.35px;line-height:10.44px;color:#333;font-family:'Liberation Sans';transform:scaleY(1.1);transform-origin:0 8px;">Finestra 240x210</div>
<div class="t" style="left:385.5px;top:356px;font-size:8.35px;line-height:10.44px;color:#333;font-family:'Liberation Sans';transform:scaleY(1.1);transform-origin:0 8px;">Finestra</div>
<div class="t" style="left:462.5px;top:356px;font-size:8.35px;line-height:10.44px;color:#333;font-family:'Liberation Sans';transform:scaleY(1.1);transform-origin:0 8px;">Sud</div>
<div class="t" style="left:551.5px;width:120px;text-align:right;top:356px;font-size:8.6px;line-height:10.75px;color:#333;font-family:'Liberation Sans';transform:scaleY(1.1);transform-origin:0 8px;">1.00</div>
<div class="t" style="left:680.5px;width:120px;text-align:right;top:356px;font-size:8.6px;line-height:10.75px;color:#333;font-family:'Liberation Sans';transform:scaleY(1.1);transform-origin:0 8px;">10.08</div>
<div class="t" style="left:810.4px;width:120px;text-align:right;top:356px;font-size:8.6px;line-height:10.75px;color:#333;font-family:'Liberation Sans';transform:scaleY(1.1);transform-origin:0 8px;">1.044</div>
<div class="t" style="left:990.3px;width:120px;text-align:right;top:356px;font-size:8.6px;line-height:10.75px;color:#333;font-family:'Liberation Sans';transform:scaleY(1.1);transform-origin:0 8px;">1.000</div>
<div class="t" style="left:1094.5px;width:120px;text-align:right;top:356px;font-size:8.6px;line-height:10.75px;color:#333;font-family:'Liberation Sans';transform:scaleY(1.1);transform-origin:0 8px;">294.7</div>
<div class="t" style="left:1342.5px;width:120px;text-align:right;top:356px;font-size:8.6px;line-height:10.75px;color:#333;font-family:'Liberation Sans';transform:scaleY(1.1);transform-origin:0 8px;">2.2</div>
<div style="left:267px;top:384.2px;width:1198.5px;height:1px;background:#e8e8e8"></div>
<div class="t" style="left:270.2px;top:372px;font-size:8.35px;line-height:10.44px;color:#333;font-family:'Liberation Sans';transform:scaleY(1.1);transform-origin:0 8px;">Cassonetto Finestra 240x210</div>
<div class="t" style="left:385.5px;top:372px;font-size:8.35px;line-height:10.44px;color:#333;font-family:'Liberation Sans';transform:scaleY(1.1);transform-origin:0 8px;">Cassonetto</div>
<div class="t" style="left:462.5px;top:372px;font-size:8.35px;line-height:10.44px;color:#333;font-family:'Liberation Sans';transform:scaleY(1.1);transform-origin:0 8px;">Sud</div>
<div class="t" style="left:551.5px;width:120px;text-align:right;top:372px;font-size:8.6px;line-height:10.75px;color:#333;font-family:'Liberation Sans';transform:scaleY(1.1);transform-origin:0 8px;">1.00</div>
<div class="t" style="left:680.5px;width:120px;text-align:right;top:372px;font-size:8.6px;line-height:10.75px;color:#333;font-family:'Liberation Sans';transform:scaleY(1.1);transform-origin:0 8px;">1.92</div>
<div class="t" style="left:810.4px;width:120px;text-align:right;top:372px;font-size:8.6px;line-height:10.75px;color:#333;font-family:'Liberation Sans';transform:scaleY(1.1);transform-origin:0 8px;">1.000</div>
<div class="t" style="left:990.3px;width:120px;text-align:right;top:372px;font-size:8.6px;line-height:10.75px;color:#333;font-family:'Liberation Sans';transform:scaleY(1.1);transform-origin:0 8px;">1.000</div>
<div class="t" style="left:1094.5px;width:120px;text-align:right;top:372px;font-size:8.6px;line-height:10.75px;color:#333;font-family:'Liberation Sans';transform:scaleY(1.1);transform-origin:0 8px;">53.8</div>
<div class="t" style="left:1342.5px;width:120px;text-align:right;top:372px;font-size:8.6px;line-height:10.75px;color:#333;font-family:'Liberation Sans';transform:scaleY(1.1);transform-origin:0 8px;">0.4</div>
<div style="left:267px;top:400.4px;width:1198.5px;height:1px;background:#e8e8e8"></div>
<div class="t" style="left:270.2px;top:388px;font-size:8.35px;line-height:10.44px;color:#333;font-family:'Liberation Sans';transform:scaleY(1.1);transform-origin:0 8px;">Finestra 100x140</div>
<div class="t" style="left:385.5px;top:388px;font-size:8.35px;line-height:10.44px;color:#333;font-family:'Liberation Sans';transform:scaleY(1.1);transform-origin:0 8px;">Finestra</div>
<div class="t" style="left:462.5px;top:388px;font-size:8.35px;line-height:10.44px;color:#333;font-family:'Liberation Sans';transform:scaleY(1.1);transform-origin:0 8px;">Sud</div>
<div class="t" style="left:551.5px;width:120px;text-align:right;top:388px;font-size:8.6px;line-height:10.75px;color:#333;font-family:'Liberation Sans';transform:scaleY(1.1);transform-origin:0 8px;">1.00</div>
<div class="t" style="left:680.5px;width:120px;text-align:right;top:388px;font-size:8.6px;line-height:10.75px;color:#333;font-family:'Liberation Sans';transform:scaleY(1.1);transform-origin:0 8px;">2.80</div>
<div class="t" style="left:810.4px;width:120px;text-align:right;top:388px;font-size:8.6px;line-height:10.75px;color:#333;font-family:'Liberation Sans';transform:scaleY(1.1);transform-origin:0 8px;">1.110</div>
<div class="t" style="left:990.3px;width:120px;text-align:right;top:388px;font-size:8.6px;line-height:10.75px;color:#333;font-family:'Liberation Sans';transform:scaleY(1.1);transform-origin:0 8px;">1.000</div>
<div class="t" style="left:1094.5px;width:120px;text-align:right;top:388px;font-size:8.6px;line-height:10.75px;color:#333;font-family:'Liberation Sans';transform:scaleY(1.1);transform-origin:0 8px;">87.0</div>
<div class="t" style="left:1342.5px;width:120px;text-align:right;top:388px;font-size:8.6px;line-height:10.75px;color:#333;font-family:'Liberation Sans';transform:scaleY(1.1);transform-origin:0 8px;">0.7</div>
<div style="left:267px;top:416.6px;width:1198.5px;height:1px;background:#e8e8e8"></div>
<div class="t" style="left:270.2px;top:404px;font-size:8.35px;line-height:10.44px;color:#333;font-family:'Liberation Sans';transform:scaleY(1.1);transform-origin:0 8px;">Cassonetto Finestra 100x140</div>
<div class="t" style="left:385.5px;top:404px;font-size:8.35px;line-height:10.44px;color:#333;font-family:'Liberation Sans';transform:scaleY(1.1);transform-origin:0 8px;">Cassonetto</div>
<div class="t" style="left:462.5px;top:404px;font-size:8.35px;line-height:10.44px;color:#333;font-family:'Liberation Sans';transform:scaleY(1.1);transform-origin:0 8px;">Sud</div>
<div class="t" style="left:551.5px;width:120px;text-align:right;top:404px;font-size:8.6px;line-height:10.75px;color:#333;font-family:'Liberation Sans';transform:scaleY(1.1);transform-origin:0 8px;">1.00</div>
<div class="t" style="left:680.5px;width:120px;text-align:right;top:404px;font-size:8.6px;line-height:10.75px;color:#333;font-family:'Liberation Sans';transform:scaleY(1.1);transform-origin:0 8px;">0.80</div>
<div class="t" style="left:810.4px;width:120px;text-align:right;top:404px;font-size:8.6px;line-height:10.75px;color:#333;font-family:'Liberation Sans';transform:scaleY(1.1);transform-origin:0 8px;">1.000</div>
<div class="t" style="left:990.3px;width:120px;text-align:right;top:404px;font-size:8.6px;line-height:10.75px;color:#333;font-family:'Liberation Sans';transform:scaleY(1.1);transform-origin:0 8px;">1.000</div>
<div class="t" style="left:1094.5px;width:120px;text-align:right;top:404px;font-size:8.6px;line-height:10.75px;color:#333;font-family:'Liberation Sans';transform:scaleY(1.1);transform-origin:0 8px;">22.4</div>
<div class="t" style="left:1342.5px;width:120px;text-align:right;top:404px;font-size:8.6px;line-height:10.75px;color:#333;font-family:'Liberation Sans';transform:scaleY(1.1);transform-origin:0 8px;">0.2</div>
<div style="left:267px;top:432.8px;width:1198.5px;height:1px;background:#e8e8e8"></div>
<div class="t" style="left:270.2px;top:420px;font-size:8.35px;line-height:10.44px;color:#333;font-family:'Liberation Sans';transform:scaleY(1.1);transform-origin:0 8px;">Soffitto verso non riscaldati...</div>
<div class="t" style="left:385.5px;top:420px;font-size:8.35px;line-height:10.44px;color:#333;font-family:'Liberation Sans';transform:scaleY(1.1);transform-origin:0 8px;">Soffitto</div>
<div class="t" style="left:462.5px;top:420px;font-size:8.35px;line-height:10.44px;color:#333;font-family:'Liberation Sans';transform:scaleY(1.1);transform-origin:0 8px;">Esposizione verso locale(43)-&nbsp;&nbsp; 1-Bo...</div>
<div class="t" style="left:551.5px;width:120px;text-align:right;top:420px;font-size:8.6px;line-height:10.75px;color:#333;font-family:'Liberation Sans';transform:scaleY(1.1);transform-origin:0 8px;">1.00</div>
<div class="t" style="left:680.5px;width:120px;text-align:right;top:420px;font-size:8.6px;line-height:10.75px;color:#333;font-family:'Liberation Sans';transform:scaleY(1.1);transform-origin:0 8px;">19.18</div>
<div class="t" style="left:810.4px;width:120px;text-align:right;top:420px;font-size:8.6px;line-height:10.75px;color:#333;font-family:'Liberation Sans';transform:scaleY(1.1);transform-origin:0 8px;">0.202</div>
<div class="t" style="left:990.3px;width:120px;text-align:right;top:420px;font-size:8.6px;line-height:10.75px;color:#333;font-family:'Liberation Sans';transform:scaleY(1.1);transform-origin:0 8px;">0.856</div>
<div class="t" style="left:1094.5px;width:120px;text-align:right;top:420px;font-size:8.6px;line-height:10.75px;color:#333;font-family:'Liberation Sans';transform:scaleY(1.1);transform-origin:0 8px;">93.1</div>
<div class="t" style="left:1342.5px;width:120px;text-align:right;top:420px;font-size:8.6px;line-height:10.75px;color:#333;font-family:'Liberation Sans';transform:scaleY(1.1);transform-origin:0 8px;">0.7</div>
<div style="left:267px;top:449.0px;width:1198.5px;height:1px;background:#e8e8e8"></div>
<div class="t" style="left:270.2px;top:436px;font-size:8.35px;line-height:10.44px;color:#333;font-family:'Liberation Sans';transform:scaleY(1.1);transform-origin:0 8px;">Soffitto verso non riscaldati...</div>
<div class="t" style="left:385.5px;top:436px;font-size:8.35px;line-height:10.44px;color:#333;font-family:'Liberation Sans';transform:scaleY(1.1);transform-origin:0 8px;">Soffitto</div>
<div class="t" style="left:462.5px;top:436px;font-size:8.35px;line-height:10.44px;color:#333;font-family:'Liberation Sans';transform:scaleY(1.1);transform-origin:0 8px;">Esposizione verso locale(43)-&nbsp;&nbsp; 2-Bo...</div>
<div class="t" style="left:551.5px;width:120px;text-align:right;top:436px;font-size:8.6px;line-height:10.75px;color:#333;font-family:'Liberation Sans';transform:scaleY(1.1);transform-origin:0 8px;">1.00</div>
<div class="t" style="left:680.5px;width:120px;text-align:right;top:436px;font-size:8.6px;line-height:10.75px;color:#333;font-family:'Liberation Sans';transform:scaleY(1.1);transform-origin:0 8px;">18.78</div>
<div class="t" style="left:810.4px;width:120px;text-align:right;top:436px;font-size:8.6px;line-height:10.75px;color:#333;font-family:'Liberation Sans';transform:scaleY(1.1);transform-origin:0 8px;">0.202</div>
<div class="t" style="left:990.3px;width:120px;text-align:right;top:436px;font-size:8.6px;line-height:10.75px;color:#333;font-family:'Liberation Sans';transform:scaleY(1.1);transform-origin:0 8px;">0.842</div>
<div class="t" style="left:1094.5px;width:120px;text-align:right;top:436px;font-size:8.6px;line-height:10.75px;color:#333;font-family:'Liberation Sans';transform:scaleY(1.1);transform-origin:0 8px;">89.6</div>
<div class="t" style="left:1342.5px;width:120px;text-align:right;top:436px;font-size:8.6px;line-height:10.75px;color:#333;font-family:'Liberation Sans';transform:scaleY(1.1);transform-origin:0 8px;">0.7</div>
<div style="left:267px;top:465.2px;width:1198.5px;height:1px;background:#e8e8e8"></div>
<div class="t" style="left:270.2px;top:453px;font-size:8.35px;line-height:10.44px;color:#333;font-family:'Liberation Sans';transform:scaleY(1.1);transform-origin:0 8px;">Soffitto esterno da 35 cm</div>
<div class="t" style="left:385.5px;top:453px;font-size:8.35px;line-height:10.44px;color:#333;font-family:'Liberation Sans';transform:scaleY(1.1);transform-origin:0 8px;">Soffitto</div>
<div class="t" style="left:462.5px;top:453px;font-size:8.35px;line-height:10.44px;color:#333;font-family:'Liberation Sans';transform:scaleY(1.1);transform-origin:0 8px;">Esposizione verso locale(43)-&nbsp;&nbsp; 3-Bo...</div>
<div class="t" style="left:551.5px;width:120px;text-align:right;top:453px;font-size:8.6px;line-height:10.75px;color:#333;font-family:'Liberation Sans';transform:scaleY(1.1);transform-origin:0 8px;">1.00</div>
<div class="t" style="left:680.5px;width:120px;text-align:right;top:453px;font-size:8.6px;line-height:10.75px;color:#333;font-family:'Liberation Sans';transform:scaleY(1.1);transform-origin:0 8px;">0.10</div>
<div class="t" style="left:810.4px;width:120px;text-align:right;top:453px;font-size:8.6px;line-height:10.75px;color:#333;font-family:'Liberation Sans';transform:scaleY(1.1);transform-origin:0 8px;">0.205</div>
<div class="t" style="left:990.3px;width:120px;text-align:right;top:453px;font-size:8.6px;line-height:10.75px;color:#333;font-family:'Liberation Sans';transform:scaleY(1.1);transform-origin:0 8px;">0.841</div>
<div class="t" style="left:1094.5px;width:120px;text-align:right;top:453px;font-size:8.6px;line-height:10.75px;color:#333;font-family:'Liberation Sans';transform:scaleY(1.1);transform-origin:0 8px;">0.5</div>
<div class="t" style="left:1342.5px;width:120px;text-align:right;top:453px;font-size:8.6px;line-height:10.75px;color:#333;font-family:'Liberation Sans';transform:scaleY(1.1);transform-origin:0 8px;">0.0</div>
<div style="left:267px;top:481.4px;width:1198.5px;height:1px;background:#e8e8e8"></div>
<div class="t" style="left:270.2px;top:469px;font-size:8.35px;line-height:10.44px;color:#333;font-family:'Liberation Sans';transform:scaleY(1.1);transform-origin:0 8px;">Soffitto esterno da 35 cm</div>
<div class="t" style="left:385.5px;top:469px;font-size:8.35px;line-height:10.44px;color:#333;font-family:'Liberation Sans';transform:scaleY(1.1);transform-origin:0 8px;">Soffitto</div>
<div class="t" style="left:462.5px;top:469px;font-size:8.35px;line-height:10.44px;color:#333;font-family:'Liberation Sans';transform:scaleY(1.1);transform-origin:0 8px;">Esposizione verso locale(43)-&nbsp;&nbsp; 4-Bo...</div>
<div class="t" style="left:551.5px;width:120px;text-align:right;top:469px;font-size:8.6px;line-height:10.75px;color:#333;font-family:'Liberation Sans';transform:scaleY(1.1);transform-origin:0 8px;">1.00</div>
<div class="t" style="left:680.5px;width:120px;text-align:right;top:469px;font-size:8.6px;line-height:10.75px;color:#333;font-family:'Liberation Sans';transform:scaleY(1.1);transform-origin:0 8px;">0.10</div>
<div class="t" style="left:810.4px;width:120px;text-align:right;top:469px;font-size:8.6px;line-height:10.75px;color:#333;font-family:'Liberation Sans';transform:scaleY(1.1);transform-origin:0 8px;">0.205</div>
<div class="t" style="left:990.3px;width:120px;text-align:right;top:469px;font-size:8.6px;line-height:10.75px;color:#333;font-family:'Liberation Sans';transform:scaleY(1.1);transform-origin:0 8px;">0.856</div>
<div class="t" style="left:1094.5px;width:120px;text-align:right;top:469px;font-size:8.6px;line-height:10.75px;color:#333;font-family:'Liberation Sans';transform:scaleY(1.1);transform-origin:0 8px;">0.5</div>
<div class="t" style="left:1342.5px;width:120px;text-align:right;top:469px;font-size:8.6px;line-height:10.75px;color:#333;font-family:'Liberation Sans';transform:scaleY(1.1);transform-origin:0 8px;">0.0</div>
<div style="left:267px;top:497.6px;width:1198.5px;height:1px;background:#e8e8e8"></div>
<div class="t" style="left:270.2px;top:485px;font-size:8.35px;line-height:10.44px;color:#333;font-family:'Liberation Sans';transform:scaleY(1.1);transform-origin:0 8px;">Soffitto verso non riscaldati...</div>
<div class="t" style="left:385.5px;top:485px;font-size:8.35px;line-height:10.44px;color:#333;font-family:'Liberation Sans';transform:scaleY(1.1);transform-origin:0 8px;">Soffitto</div>
<div class="t" style="left:462.5px;top:485px;font-size:8.35px;line-height:10.44px;color:#333;font-family:'Liberation Sans';transform:scaleY(1.1);transform-origin:0 8px;">Esposizione verso locale(43)-&nbsp;&nbsp; 4-Bo...</div>
<div class="t" style="left:551.5px;width:120px;text-align:right;top:485px;font-size:8.6px;line-height:10.75px;color:#333;font-family:'Liberation Sans';transform:scaleY(1.1);transform-origin:0 8px;">1.00</div>
<div class="t" style="left:680.5px;width:120px;text-align:right;top:485px;font-size:8.6px;line-height:10.75px;color:#333;font-family:'Liberation Sans';transform:scaleY(1.1);transform-origin:0 8px;">19.18</div>
<div class="t" style="left:810.4px;width:120px;text-align:right;top:485px;font-size:8.6px;line-height:10.75px;color:#333;font-family:'Liberation Sans';transform:scaleY(1.1);transform-origin:0 8px;">0.202</div>
<div class="t" style="left:990.3px;width:120px;text-align:right;top:485px;font-size:8.6px;line-height:10.75px;color:#333;font-family:'Liberation Sans';transform:scaleY(1.1);transform-origin:0 8px;">0.856</div>
<div class="t" style="left:1094.5px;width:120px;text-align:right;top:485px;font-size:8.6px;line-height:10.75px;color:#333;font-family:'Liberation Sans';transform:scaleY(1.1);transform-origin:0 8px;">93.1</div>
<div class="t" style="left:1342.5px;width:120px;text-align:right;top:485px;font-size:8.6px;line-height:10.75px;color:#333;font-family:'Liberation Sans';transform:scaleY(1.1);transform-origin:0 8px;">0.7</div>
<div style="left:267px;top:513.8px;width:1198.5px;height:1px;background:#e8e8e8"></div>
<div class="t" style="left:270.2px;top:501px;font-size:8.35px;line-height:10.44px;color:#333;font-family:'Liberation Sans';transform:scaleY(1.1);transform-origin:0 8px;">Soffitto verso non riscaldati...</div>
<div class="t" style="left:385.5px;top:501px;font-size:8.35px;line-height:10.44px;color:#333;font-family:'Liberation Sans';transform:scaleY(1.1);transform-origin:0 8px;">Soffitto</div>
<div class="t" style="left:462.5px;top:501px;font-size:8.35px;line-height:10.44px;color:#333;font-family:'Liberation Sans';transform:scaleY(1.1);transform-origin:0 8px;">Esposizione verso locale(43)-&nbsp;&nbsp; 3-Bo...</div>
<div class="t" style="left:551.5px;width:120px;text-align:right;top:501px;font-size:8.6px;line-height:10.75px;color:#333;font-family:'Liberation Sans';transform:scaleY(1.1);transform-origin:0 8px;">1.00</div>
<div class="t" style="left:680.5px;width:120px;text-align:right;top:501px;font-size:8.6px;line-height:10.75px;color:#333;font-family:'Liberation Sans';transform:scaleY(1.1);transform-origin:0 8px;">18.78</div>
<div class="t" style="left:810.4px;width:120px;text-align:right;top:501px;font-size:8.6px;line-height:10.75px;color:#333;font-family:'Liberation Sans';transform:scaleY(1.1);transform-origin:0 8px;">0.202</div>
<div class="t" style="left:990.3px;width:120px;text-align:right;top:501px;font-size:8.6px;line-height:10.75px;color:#333;font-family:'Liberation Sans';transform:scaleY(1.1);transform-origin:0 8px;">0.841</div>
<div class="t" style="left:1094.5px;width:120px;text-align:right;top:501px;font-size:8.6px;line-height:10.75px;color:#333;font-family:'Liberation Sans';transform:scaleY(1.1);transform-origin:0 8px;">89.5</div>
<div class="t" style="left:1342.5px;width:120px;text-align:right;top:501px;font-size:8.6px;line-height:10.75px;color:#333;font-family:'Liberation Sans';transform:scaleY(1.1);transform-origin:0 8px;">0.7</div>
<div style="left:267px;top:514.3px;width:1198.5px;height:1px;background:#e8e8e8"></div>
<div style="left:1465.5px;top:207.3px;width:11.5px;height:318px;background:#efefef"></div>
<div style="left:1466px;top:207.8px;width:10.7px;height:12px;background:#fff;border:1px solid #adadad;box-sizing:border-box"></div>
<div style="left:1466px;top:354px;width:10.7px;height:158.5px;background:#fff;border:1px solid #adadad;box-sizing:border-box"></div>
<div style="left:1466px;top:512.2px;width:10.7px;height:12px;background:#fff;border:1px solid #adadad;box-sizing:border-box"></div>
<svg style="position:absolute;left:1466px;top:207px" width="11" height="318"><polygon points="2.5,9 5.4,6 8.3,9" fill="#606060"/><polygon points="2.5,310 8.3,310 5.4,313" fill="#606060"/></svg>
<div style="left:250px;top:525px;width:1227px;height:1px;background:#dedede"></div>
<div style="left:675.6px;top:531px;width:127.5px;height:17.7px;background:#efefef"></div>
<div class="t" style="left:700.7px;width:100px;text-align:right;top:536px;font-size:8.6px;line-height:10.75px;color:#333;font-family:'Liberation Sans';transform:scaleY(1.1);transform-origin:0 8px;">835.8</div>
<div style="left:1114.8px;top:531px;width:102px;height:17.7px;background:#efefef"></div>
<div class="t" style="left:1114.5px;width:100px;text-align:right;top:536px;font-size:8.6px;line-height:10.75px;color:#333;font-family:'Liberation Sans';transform:scaleY(1.1);transform-origin:0 8px;">13190.6</div>
<div style="left:250px;top:554px;width:1227px;height:1.5px;background:#b8b8b8"></div>
<div style="left:1206px;top:177px;width:197px;height:226px;background:#fff"></div>
<div style="left:1207px;top:177px;width:10.9px;height:10.5px;background:#fff;border-right:1px solid #b8b8b8;box-sizing:border-box"></div>
<svg style="position:absolute;left:1208px;top:178px" width="9" height="9"><polygon points="1.5,1.6 7.3,1.6 5,4.3 5,6.8 3.8,6.8 3.8,4.3" fill="#1a5fb4"/></svg>
<div style="left:1206px;top:186.6px;width:197px;height:1.2px;background:#c6c6c6"></div>
<div style="left:1207px;top:187.5px;width:196.2px;height:215.2px;border:1px solid #b5b5b5;border-top:none;box-sizing:border-box"></div>
<div class="t" style="left:1215.4px;top:195px;font-size:8.3px;line-height:10.38px;color:#333;font-family:'Liberation Sans';transform:scaleY(1.1);transform-origin:0 8px;">Valori</div>
<div class="t" style="left:1247.4px;top:195px;font-size:8.3px;line-height:10.38px;color:#333;font-family:'Liberation Sans';transform:scaleY(1.1);transform-origin:0 8px;">Filtri numerici</div>
<svg style="position:absolute;left:1207px;top:205px" width="196" height="15"><path d="M1.5 12.2 H14 L18.5 5.6 L23 12.2 H194.5" fill="none" stroke="#d8d8d8" stroke-width="1"/></svg>
<div class="t" style="left:1216.4px;top:231px;font-size:8px;line-height:10.0px;color:#333;font-family:'Liberation Sans';transform:scaleY(1.1);transform-origin:0 7px;">Da</div>
<div style="left:1230px;top:227px;width:73.5px;height:14.8px;background:#fff;border:1px solid #b9b9b9;box-sizing:border-box"></div>
<div class="t" style="left:1232.7px;top:231px;font-size:8px;line-height:10.0px;color:#888;font-family:'Liberation Sans';transform:scaleY(1.1);transform-origin:0 7px;">0.50</div>
<div class="t" style="left:1307.3px;top:231px;font-size:8px;line-height:10.0px;color:#333;font-family:'Liberation Sans';transform:scaleY(1.1);transform-origin:0 7px;">to</div>
<div style="left:1318.2px;top:227.3px;width:75.5px;height:14.5px;background:#fff;border:1px solid #b9b9b9;box-sizing:border-box"></div>
<div class="t" style="left:1320.8px;top:231px;font-size:8px;line-height:10.0px;color:#888;font-family:'Liberation Sans';transform:scaleY(1.1);transform-origin:0 7px;">5906.20</div>
<svg style="position:absolute;left:1207px;top:0px" width="196" height="300"><rect x="17.2" y="262.4" width="0.9" height="3" fill="#9a9a9a"/><rect x="33.42" y="262.4" width="0.9" height="3" fill="#9a9a9a"/><rect x="49.64" y="262.4" width="0.9" height="3" fill="#9a9a9a"/><rect x="65.86" y="262.4" width="0.9" height="3" fill="#9a9a9a"/><rect x="82.08" y="262.4" width="0.9" height="3" fill="#9a9a9a"/><rect x="98.3" y="262.4" width="0.9" height="3" fill="#9a9a9a"/><rect x="114.52" y="262.4" width="0.9" height="3" fill="#9a9a9a"/><rect x="130.74" y="262.4" width="0.9" height="3" fill="#9a9a9a"/><rect x="146.96" y="262.4" width="0.9" height="3" fill="#9a9a9a"/><rect x="163.18" y="262.4" width="0.9" height="3" fill="#9a9a9a"/><rect x="179.4" y="262.4" width="0.9" height="3" fill="#9a9a9a"/><rect x="17.7" y="271.2" width="162" height="1.6" fill="#b4b4b4"/><rect x="14" y="267.3" width="3.7" height="9.4" fill="#8a8a8a"/><rect x="179.4" y="267.1" width="3.7" height="9.6" fill="#8a8a8a"/></svg>
<div style="left:1208.7px;top:365.2px;width:193.3px;height:1.2px;background:#e6e6e6"></div>
<div style="left:1217.4px;top:376px;width:56.3px;height:16.6px;background:#fff;border:1px solid #dedede;box-sizing:border-box"></div>
<div class="t" style="left:1205.5px;width:80px;text-align:center;top:380px;font-size:8px;line-height:10.0px;color:#8a8a8a;font-family:'Liberation Sans';transform:scaleY(1.1);transform-origin:0 7px;">Pulisci Filtro</div>
<div style="left:1356.3px;top:376px;width:39.8px;height:16.6px;background:#fff;border:1px solid #9c9c9c;box-sizing:border-box;box-shadow:1px 1px 0 #d0d0d0"></div>
<div class="t" style="left:1346.2px;width:60px;text-align:center;top:380px;font-size:8px;line-height:10.0px;color:#333;font-family:'Liberation Sans';transform:scaleY(1.1);transform-origin:0 7px;">Chiudi</div>
<svg style="position:absolute;left:1390px;top:389px" width="12" height="12"><rect x="8" y="2" width="1" height="1" fill="#aaa"/><rect x="5.5" y="4.5" width="1" height="1" fill="#aaa"/><rect x="8" y="4.5" width="1" height="1" fill="#aaa"/><rect x="3" y="7" width="1" height="1" fill="#aaa"/><rect x="5.5" y="7" width="1" height="1" fill="#aaa"/><rect x="8" y="7" width="1" height="1" fill="#aaa"/></svg>
<div style="left:1203px;top:174.2px;width:203px;height:232.4px;border:3px solid #ff0000;box-sizing:border-box"></div>
<svg style="position:absolute;left:1150px;top:165px" width="60" height="40"><polygon points="9.1,13.2 39,13.2 39,7.6 50.2,18.8 39,30 39,23.8 9.1,23.8" fill="#ff0000"/></svg>
<div class="t" style="left:1191.2px;top:142px;font-size:20.5px;line-height:25.62px;color:#111;font-family:'Liberation Mono';-webkit-text-stroke:0;">Filtro su colonna</div>
<div style="left:249px;top:581.4px;width:624px;height:204px;border:1px solid #b8b8b8;border-bottom:none;box-sizing:border-box"></div>
<div class="t" style="left:411.2px;width:300px;text-align:center;top:567px;font-size:8.8px;line-height:11.0px;color:#444;font-family:'Liberation Sans';transform:scaleY(1.1);transform-origin:0 8px;">Andamento delle dispersioni per struttura</div>
<div style="left:420.4px;top:590.4px;width:443.4px;height:171.7px;border:1px solid #dcdcdc;box-sizing:border-box"></div>
<div style="left:454.01px;top:590.4px;width:1px;height:175.7px;background:#e2e2e2"></div>
<div style="left:488.12px;top:590.4px;width:1px;height:175.7px;background:#e2e2e2"></div>
<div style="left:522.22px;top:590.4px;width:1px;height:175.7px;background:#e2e2e2"></div>
<div style="left:556.33px;top:590.4px;width:1px;height:175.7px;background:#e2e2e2"></div>
<div style="left:590.44px;top:590.4px;width:1px;height:175.7px;background:#e2e2e2"></div>
<div style="left:624.55px;top:590.4px;width:1px;height:175.7px;background:#e2e2e2"></div>
<div style="left:658.65px;top:590.4px;width:1px;height:175.7px;background:#e2e2e2"></div>
<div style="left:692.76px;top:590.4px;width:1px;height:175.7px;background:#e2e2e2"></div>
<div style="left:726.87px;top:590.4px;width:1px;height:175.7px;background:#e2e2e2"></div>
<div style="left:760.98px;top:590.4px;width:1px;height:175.7px;background:#e2e2e2"></div>
<div style="left:795.08px;top:590.4px;width:1px;height:175.7px;background:#e2e2e2"></div>
<div style="left:829.19px;top:590.4px;width:1px;height:175.7px;background:#e2e2e2"></div>
<div class="t" style="left:400.4px;width:40px;text-align:center;top:770px;font-size:8px;line-height:10.0px;color:#444;font-family:'Liberation Sans';transform:scaleY(1.1);transform-origin:0 7px;">0</div>
<div class="t" style="left:434.51px;width:40px;text-align:center;top:770px;font-size:8px;line-height:10.0px;color:#444;font-family:'Liberation Sans';transform:scaleY(1.1);transform-origin:0 7px;">500</div>
<div class="t" style="left:468.62px;width:40px;text-align:center;top:770px;font-size:8px;line-height:10.0px;color:#444;font-family:'Liberation Sans';transform:scaleY(1.1);transform-origin:0 7px;">1000</div>
<div class="t" style="left:502.72px;width:40px;text-align:center;top:770px;font-size:8px;line-height:10.0px;color:#444;font-family:'Liberation Sans';transform:scaleY(1.1);transform-origin:0 7px;">1500</div>
<div class="t" style="left:536.83px;width:40px;text-align:center;top:770px;font-size:8px;line-height:10.0px;color:#444;font-family:'Liberation Sans';transform:scaleY(1.1);transform-origin:0 7px;">2000</div>
<div class="t" style="left:570.94px;width:40px;text-align:center;top:770px;font-size:8px;line-height:10.0px;color:#444;font-family:'Liberation Sans';transform:scaleY(1.1);transform-origin:0 7px;">2500</div>
<div class="t" style="left:605.05px;width:40px;text-align:center;top:770px;font-size:8px;line-height:10.0px;color:#444;font-family:'Liberation Sans';transform:scaleY(1.1);transform-origin:0 7px;">3000</div>
<div class="t" style="left:639.15px;width:40px;text-align:center;top:770px;font-size:8px;line-height:10.0px;color:#444;font-family:'Liberation Sans';transform:scaleY(1.1);transform-origin:0 7px;">3500</div>
<div class="t" style="left:673.26px;width:40px;text-align:center;top:770px;font-size:8px;line-height:10.0px;color:#444;font-family:'Liberation Sans';transform:scaleY(1.1);transform-origin:0 7px;">4000</div>
<div class="t" style="left:707.37px;width:40px;text-align:center;top:770px;font-size:8px;line-height:10.0px;color:#444;font-family:'Liberation Sans';transform:scaleY(1.1);transform-origin:0 7px;">4500</div>
<div class="t" style="left:741.48px;width:40px;text-align:center;top:770px;font-size:8px;line-height:10.0px;color:#444;font-family:'Liberation Sans';transform:scaleY(1.1);transform-origin:0 7px;">5000</div>
<div class="t" style="left:775.58px;width:40px;text-align:center;top:770px;font-size:8px;line-height:10.0px;color:#444;font-family:'Liberation Sans';transform:scaleY(1.1);transform-origin:0 7px;">5500</div>
<div class="t" style="left:809.69px;width:40px;text-align:center;top:770px;font-size:8px;line-height:10.0px;color:#444;font-family:'Liberation Sans';transform:scaleY(1.1);transform-origin:0 7px;">6000</div>
<div style="left:419.9px;top:762.1px;width:1px;height:2.2px;background:#d6d6d6"></div>
<div style="left:436.95px;top:762.1px;width:1px;height:2.2px;background:#d6d6d6"></div>
<div style="left:454.01px;top:762.1px;width:1px;height:2.2px;background:#d6d6d6"></div>
<div style="left:471.06px;top:762.1px;width:1px;height:2.2px;background:#d6d6d6"></div>
<div style="left:488.12px;top:762.1px;width:1px;height:2.2px;background:#d6d6d6"></div>
<div style="left:505.17px;top:762.1px;width:1px;height:2.2px;background:#d6d6d6"></div>
<div style="left:522.22px;top:762.1px;width:1px;height:2.2px;background:#d6d6d6"></div>
<div style="left:539.28px;top:762.1px;width:1px;height:2.2px;background:#d6d6d6"></div>
<div style="left:556.33px;top:762.1px;width:1px;height:2.2px;background:#d6d6d6"></div>
<div style="left:573.38px;top:762.1px;width:1px;height:2.2px;background:#d6d6d6"></div>
<div style="left:590.44px;top:762.1px;width:1px;height:2.2px;background:#d6d6d6"></div>
<div style="left:607.49px;top:762.1px;width:1px;height:2.2px;background:#d6d6d6"></div>
<div style="left:624.55px;top:762.1px;width:1px;height:2.2px;background:#d6d6d6"></div>
<div style="left:641.6px;top:762.1px;width:1px;height:2.2px;background:#d6d6d6"></div>
<div style="left:658.65px;top:762.1px;width:1px;height:2.2px;background:#d6d6d6"></div>
<div style="left:675.71px;top:762.1px;width:1px;height:2.2px;background:#d6d6d6"></div>
<div style="left:692.76px;top:762.1px;width:1px;height:2.2px;background:#d6d6d6"></div>
<div style="left:709.82px;top:762.1px;width:1px;height:2.2px;background:#d6d6d6"></div>
<div style="left:726.87px;top:762.1px;width:1px;height:2.2px;background:#d6d6d6"></div>
<div style="left:743.92px;top:762.1px;width:1px;height:2.2px;background:#d6d6d6"></div>
<div style="left:760.98px;top:762.1px;width:1px;height:2.2px;background:#d6d6d6"></div>
<div style="left:778.03px;top:762.1px;width:1px;height:2.2px;background:#d6d6d6"></div>
<div style="left:795.08px;top:762.1px;width:1px;height:2.2px;background:#d6d6d6"></div>
<div style="left:812.14px;top:762.1px;width:1px;height:2.2px;background:#d6d6d6"></div>
<div style="left:829.19px;top:762.1px;width:1px;height:2.2px;background:#d6d6d6"></div>
<div style="left:846.25px;top:762.1px;width:1px;height:2.2px;background:#d6d6d6"></div>
<div style="left:420.7px;top:592.3px;width:402.9px;height:5.2px;background:#b4c7e7"></div>
<div class="t" style="left:191.7px;width:220px;text-align:right;top:590px;font-size:8.5px;line-height:10.62px;color:#333;font-family:'Liberation Sans';transform:scaleY(1.1);transform-origin:0 8px;">Infiltrazioni</div>
<div style="left:416.9px;top:594.92px;width:3.5px;height:1px;background:#dcdcdc"></div>
<div style="left:420.7px;top:601.33px;width:119.6px;height:5.2px;background:#f6a460"></div>
<div class="t" style="left:191.7px;width:220px;text-align:right;top:599px;font-size:8.5px;line-height:10.62px;color:#333;font-family:'Liberation Sans';transform:scaleY(1.1);transform-origin:0 8px;">Parete esterna da 30 cm</div>
<div style="left:416.9px;top:603.95px;width:3.5px;height:1px;background:#dcdcdc"></div>
<div style="left:420.7px;top:610.37px;width:89.6px;height:5.2px;background:#6abbd4"></div>
<div class="t" style="left:191.7px;width:220px;text-align:right;top:608px;font-size:8.5px;line-height:10.62px;color:#333;font-family:'Liberation Sans';transform:scaleY(1.1);transform-origin:0 8px;">Finestra 140x140</div>
<div style="left:416.9px;top:612.99px;width:3.5px;height:1px;background:#dcdcdc"></div>
<div style="left:420.7px;top:619.4px;width:46.5px;height:5.2px;background:#9b86c0"></div>
<div class="t" style="left:191.7px;width:220px;text-align:right;top:617px;font-size:8.5px;line-height:10.62px;color:#333;font-family:'Liberation Sans';transform:scaleY(1.1);transform-origin:0 8px;">Pavimento verso non riscaldati da 35 cm</div>
<div style="left:416.9px;top:622.02px;width:3.5px;height:1px;background:#dcdcdc"></div>
<div style="left:420.7px;top:628.44px;width:40.6px;height:5.2px;background:#a9c878"></div>
<div class="t" style="left:191.7px;width:220px;text-align:right;top:626px;font-size:8.5px;line-height:10.62px;color:#333;font-family:'Liberation Sans';transform:scaleY(1.1);transform-origin:0 8px;">Finestra 240x210 con aggetto</div>
<div style="left:416.9px;top:631.06px;width:3.5px;height:1px;background:#dcdcdc"></div>
<div style="left:420.7px;top:637.47px;width:29.6px;height:5.2px;background:#d07370"></div>
<div class="t" style="left:191.7px;width:220px;text-align:right;top:635px;font-size:8.5px;line-height:10.62px;color:#333;font-family:'Liberation Sans';transform:scaleY(1.1);transform-origin:0 8px;">Soffitto esterno da 35 cm</div>
<div style="left:416.9px;top:640.09px;width:3.5px;height:1px;background:#dcdcdc"></div>
<div style="left:420.7px;top:646.51px;width:26.6px;height:5.2px;background:#6f96cd"></div>
<div class="t" style="left:191.7px;width:220px;text-align:right;top:644px;font-size:8.5px;line-height:10.62px;color:#333;font-family:'Liberation Sans';transform:scaleY(1.1);transform-origin:0 8px;">Parete interna da 30 cm</div>
<div style="left:416.9px;top:649.13px;width:3.5px;height:1px;background:#dcdcdc"></div>
<div style="left:420.7px;top:655.54px;width:24.8px;height:5.2px;background:#f68428"></div>
<div class="t" style="left:191.7px;width:220px;text-align:right;top:653px;font-size:8.5px;line-height:10.62px;color:#333;font-family:'Liberation Sans';transform:scaleY(1.1);transform-origin:0 8px;">Soffitto verso non riscaldati da35 cm</div>
<div style="left:416.9px;top:658.16px;width:3.5px;height:1px;background:#dcdcdc"></div>
<div style="left:420.7px;top:664.58px;width:24.8px;height:5.2px;background:#35a6c4"></div>
<div class="t" style="left:191.7px;width:220px;text-align:right;top:662px;font-size:8.5px;line-height:10.62px;color:#333;font-family:'Liberation Sans';transform:scaleY(1.1);transform-origin:0 8px;">Porta interna</div>
<div style="left:416.9px;top:667.2px;width:3.5px;height:1px;background:#dcdcdc"></div>
<div style="left:420.7px;top:673.61px;width:20.4px;height:5.2px;background:#7457a3"></div>
<div class="t" style="left:191.7px;width:220px;text-align:right;top:671px;font-size:8.5px;line-height:10.62px;color:#333;font-family:'Liberation Sans';transform:scaleY(1.1);transform-origin:0 8px;">Finestra 240x210</div>
<div style="left:416.9px;top:676.23px;width:3.5px;height:1px;background:#dcdcdc"></div>
<div style="left:420.7px;top:682.65px;width:16.6px;height:5.2px;background:#94b956"></div>
<div class="t" style="left:191.7px;width:220px;text-align:right;top:680px;font-size:8.5px;line-height:10.62px;color:#333;font-family:'Liberation Sans';transform:scaleY(1.1);transform-origin:0 8px;">Finestra 100x140 con aggetto</div>
<div style="left:416.9px;top:685.27px;width:3.5px;height:1px;background:#dcdcdc"></div>
<div style="left:420.7px;top:691.68px;width:16.6px;height:5.2px;background:#be4b48"></div>
<div class="t" style="left:191.7px;width:220px;text-align:right;top:689px;font-size:8.5px;line-height:10.62px;color:#333;font-family:'Liberation Sans';transform:scaleY(1.1);transform-origin:0 8px;">Finestra 80x140</div>
<div style="left:416.9px;top:694.3px;width:3.5px;height:1px;background:#dcdcdc"></div>
<div style="left:420.7px;top:700.72px;width:14.6px;height:5.2px;background:#4a7ebb"></div>
<div class="t" style="left:191.7px;width:220px;text-align:right;top:698px;font-size:8.5px;line-height:10.62px;color:#333;font-family:'Liberation Sans';transform:scaleY(1.1);transform-origin:0 8px;">Cassonetto Finestra 140x140</div>
<div style="left:416.9px;top:703.34px;width:3.5px;height:1px;background:#dcdcdc"></div>
<div style="left:420.7px;top:709.75px;width:7.6px;height:5.2px;background:#f77b1d"></div>
<div class="t" style="left:191.7px;width:220px;text-align:right;top:707px;font-size:8.5px;line-height:10.62px;color:#333;font-family:'Liberation Sans';transform:scaleY(1.1);transform-origin:0 8px;">Cassonetto Finestra 240x210 con aggetto</div>
<div style="left:416.9px;top:712.37px;width:3.5px;height:1px;background:#dcdcdc"></div>
<div style="left:420.7px;top:718.79px;width:5.6px;height:5.2px;background:#2c9fbe"></div>
<div class="t" style="left:191.7px;width:220px;text-align:right;top:716px;font-size:8.5px;line-height:10.62px;color:#333;font-family:'Liberation Sans';transform:scaleY(1.1);transform-origin:0 8px;">Finestra 100x140</div>
<div style="left:416.9px;top:721.41px;width:3.5px;height:1px;background:#dcdcdc"></div>
<div style="left:420.7px;top:727.82px;width:4.2px;height:5.2px;background:#6a4b9d"></div>
<div class="t" style="left:191.7px;width:220px;text-align:right;top:725px;font-size:8.5px;line-height:10.62px;color:#333;font-family:'Liberation Sans';transform:scaleY(1.1);transform-origin:0 8px;">Cassonetto Finestra 80x140</div>
<div style="left:416.9px;top:730.44px;width:3.5px;height:1px;background:#dcdcdc"></div>
<div style="left:420.7px;top:736.86px;width:3.5px;height:5.2px;background:#8ab54a"></div>
<div class="t" style="left:191.7px;width:220px;text-align:right;top:734px;font-size:8.5px;line-height:10.62px;color:#333;font-family:'Liberation Sans';transform:scaleY(1.1);transform-origin:0 8px;">Cassonetto Finestra 240x210</div>
<div style="left:416.9px;top:739.48px;width:3.5px;height:1px;background:#dcdcdc"></div>
<div style="left:420.7px;top:745.89px;width:2.6px;height:5.2px;background:#b52b2b"></div>
<div class="t" style="left:191.7px;width:220px;text-align:right;top:743px;font-size:8.5px;line-height:10.62px;color:#333;font-family:'Liberation Sans';transform:scaleY(1.1);transform-origin:0 8px;">Cassonetto Finestra 100x140 con aggetto</div>
<div style="left:416.9px;top:748.51px;width:3.5px;height:1px;background:#dcdcdc"></div>
<div style="left:420.7px;top:754.93px;width:1.4px;height:5.2px;background:#93aad6"></div>
<div class="t" style="left:191.7px;width:220px;text-align:right;top:752px;font-size:8.5px;line-height:10.62px;color:#333;font-family:'Liberation Sans';transform:scaleY(1.1);transform-origin:0 8px;">Cassonetto Finestra 100x140</div>
<div style="left:416.9px;top:757.55px;width:3.5px;height:1px;background:#dcdcdc"></div>
<div style="left:880.5px;top:581.4px;width:597.5px;height:204px;border:1px solid #b8b8b8;border-bottom:none;box-sizing:border-box"></div>
<div class="t" style="left:1030.0px;width:300px;text-align:center;top:567px;font-size:8.8px;line-height:11.0px;color:#444;font-family:'Liberation Sans';transform:scaleY(1.1);transform-origin:0 8px;">Andamento delle dispersioni per esposizione</div>
<div style="left:1066.3px;top:590.4px;width:404.1px;height:171.7px;border:1px solid #dcdcdc;box-sizing:border-box"></div>
<div style="left:1096.88px;top:590.4px;width:1px;height:175.7px;background:#e2e2e2"></div>
<div style="left:1127.97px;top:590.4px;width:1px;height:175.7px;background:#e2e2e2"></div>
<div style="left:1159.05px;top:590.4px;width:1px;height:175.7px;background:#e2e2e2"></div>
<div style="left:1190.14px;top:590.4px;width:1px;height:175.7px;background:#e2e2e2"></div>
<div style="left:1221.22px;top:590.4px;width:1px;height:175.7px;background:#e2e2e2"></div>
<div style="left:1252.31px;top:590.4px;width:1px;height:175.7px;background:#e2e2e2"></div>
<div style="left:1283.39px;top:590.4px;width:1px;height:175.7px;background:#e2e2e2"></div>
<div style="left:1314.48px;top:590.4px;width:1px;height:175.7px;background:#e2e2e2"></div>
<div style="left:1345.56px;top:590.4px;width:1px;height:175.7px;background:#e2e2e2"></div>
<div style="left:1376.65px;top:590.4px;width:1px;height:175.7px;background:#e2e2e2"></div>
<div style="left:1407.73px;top:590.4px;width:1px;height:175.7px;background:#e2e2e2"></div>
<div style="left:1438.82px;top:590.4px;width:1px;height:175.7px;background:#e2e2e2"></div>
<div class="t" style="left:1046.3px;width:40px;text-align:center;top:770px;font-size:8px;line-height:10.0px;color:#444;font-family:'Liberation Sans';transform:scaleY(1.1);transform-origin:0 7px;">0</div>
<div class="t" style="left:1077.38px;width:40px;text-align:center;top:770px;font-size:8px;line-height:10.0px;color:#444;font-family:'Liberation Sans';transform:scaleY(1.1);transform-origin:0 7px;">500</div>
<div class="t" style="left:1108.47px;width:40px;text-align:center;top:770px;font-size:8px;line-height:10.0px;color:#444;font-family:'Liberation Sans';transform:scaleY(1.1);transform-origin:0 7px;">1000</div>
<div class="t" style="left:1139.55px;width:40px;text-align:center;top:770px;font-size:8px;line-height:10.0px;color:#444;font-family:'Liberation Sans';transform:scaleY(1.1);transform-origin:0 7px;">1500</div>
<div class="t" style="left:1170.64px;width:40px;text-align:center;top:770px;font-size:8px;line-height:10.0px;color:#444;font-family:'Liberation Sans';transform:scaleY(1.1);transform-origin:0 7px;">2000</div>
<div class="t" style="left:1201.72px;width:40px;text-align:center;top:770px;font-size:8px;line-height:10.0px;color:#444;font-family:'Liberation Sans';transform:scaleY(1.1);transform-origin:0 7px;">2500</div>
<div class="t" style="left:1232.81px;width:40px;text-align:center;top:770px;font-size:8px;line-height:10.0px;color:#444;font-family:'Liberation Sans';transform:scaleY(1.1);transform-origin:0 7px;">3000</div>
<div class="t" style="left:1263.89px;width:40px;text-align:center;top:770px;font-size:8px;line-height:10.0px;color:#444;font-family:'Liberation Sans';transform:scaleY(1.1);transform-origin:0 7px;">3500</div>
<div class="t" style="left:1294.98px;width:40px;text-align:center;top:770px;font-size:8px;line-height:10.0px;color:#444;font-family:'Liberation Sans';transform:scaleY(1.1);transform-origin:0 7px;">4000</div>
<div class="t" style="left:1326.06px;width:40px;text-align:center;top:770px;font-size:8px;line-height:10.0px;color:#444;font-family:'Liberation Sans';transform:scaleY(1.1);transform-origin:0 7px;">4500</div>
<div class="t" style="left:1357.15px;width:40px;text-align:center;top:770px;font-size:8px;line-height:10.0px;color:#444;font-family:'Liberation Sans';transform:scaleY(1.1);transform-origin:0 7px;">5000</div>
<div class="t" style="left:1388.23px;width:40px;text-align:center;top:770px;font-size:8px;line-height:10.0px;color:#444;font-family:'Liberation Sans';transform:scaleY(1.1);transform-origin:0 7px;">5500</div>
<div class="t" style="left:1419.32px;width:40px;text-align:center;top:770px;font-size:8px;line-height:10.0px;color:#444;font-family:'Liberation Sans';transform:scaleY(1.1);transform-origin:0 7px;">6000</div>
<div style="left:1065.8px;top:762.1px;width:1px;height:2.2px;background:#d6d6d6"></div>
<div style="left:1081.34px;top:762.1px;width:1px;height:2.2px;background:#d6d6d6"></div>
<div style="left:1096.88px;top:762.1px;width:1px;height:2.2px;background:#d6d6d6"></div>
<div style="left:1112.43px;top:762.1px;width:1px;height:2.2px;background:#d6d6d6"></div>
<div style="left:1127.97px;top:762.1px;width:1px;height:2.2px;background:#d6d6d6"></div>
<div style="left:1143.51px;top:762.1px;width:1px;height:2.2px;background:#d6d6d6"></div>
<div style="left:1159.05px;top:762.1px;width:1px;height:2.2px;background:#d6d6d6"></div>
<div style="left:1174.6px;top:762.1px;width:1px;height:2.2px;background:#d6d6d6"></div>
<div style="left:1190.14px;top:762.1px;width:1px;height:2.2px;background:#d6d6d6"></div>
<div style="left:1205.68px;top:762.1px;width:1px;height:2.2px;background:#d6d6d6"></div>
<div style="left:1221.22px;top:762.1px;width:1px;height:2.2px;background:#d6d6d6"></div>
<div style="left:1236.77px;top:762.1px;width:1px;height:2.2px;background:#d6d6d6"></div>
<div style="left:1252.31px;top:762.1px;width:1px;height:2.2px;background:#d6d6d6"></div>
<div style="left:1267.85px;top:762.1px;width:1px;height:2.2px;background:#d6d6d6"></div>
<div style="left:1283.39px;top:762.1px;width:1px;height:2.2px;background:#d6d6d6"></div>
<div style="left:1298.93px;top:762.1px;width:1px;height:2.2px;background:#d6d6d6"></div>
<div style="left:1314.48px;top:762.1px;width:1px;height:2.2px;background:#d6d6d6"></div>
<div style="left:1330.02px;top:762.1px;width:1px;height:2.2px;background:#d6d6d6"></div>
<div style="left:1345.56px;top:762.1px;width:1px;height:2.2px;background:#d6d6d6"></div>
<div style="left:1361.1px;top:762.1px;width:1px;height:2.2px;background:#d6d6d6"></div>
<div style="left:1376.65px;top:762.1px;width:1px;height:2.2px;background:#d6d6d6"></div>
<div style="left:1392.19px;top:762.1px;width:1px;height:2.2px;background:#d6d6d6"></div>
<div style="left:1407.73px;top:762.1px;width:1px;height:2.2px;background:#d6d6d6"></div>
<div style="left:1423.27px;top:762.1px;width:1px;height:2.2px;background:#d6d6d6"></div>
<div style="left:1438.82px;top:762.1px;width:1px;height:2.2px;background:#d6d6d6"></div>
<div style="left:1454.36px;top:762.1px;width:1px;height:2.2px;background:#d6d6d6"></div>
<div style="left:1066.6px;top:592.4px;width:366.6px;height:6px;background:#cbbcda"></div>
<div class="t" style="left:838.2px;width:220px;text-align:right;top:591px;font-size:8.5px;line-height:10.62px;color:#333;font-family:'Liberation Sans';transform:scaleY(1.1);transform-origin:0 8px;">Infiltrazioni</div>
<div style="left:1062.8px;top:595.76px;width:3.5px;height:1px;background:#dcdcdc"></div>
<div style="left:1066.6px;top:603.13px;width:123.6px;height:6px;background:#d3e0b4"></div>
<div class="t" style="left:838.2px;width:220px;text-align:right;top:601px;font-size:8.5px;line-height:10.62px;color:#333;font-family:'Liberation Sans';transform:scaleY(1.1);transform-origin:0 8px;">Nord</div>
<div style="left:1062.8px;top:606.5px;width:3.5px;height:1px;background:#dcdcdc"></div>
<div style="left:1066.6px;top:613.86px;width:98.7px;height:6px;background:#e4b1b0"></div>
<div class="t" style="left:838.2px;width:220px;text-align:right;top:612px;font-size:8.5px;line-height:10.62px;color:#333;font-family:'Liberation Sans';transform:scaleY(1.1);transform-origin:0 8px;">Sud</div>
<div style="left:1062.8px;top:617.23px;width:3.5px;height:1px;background:#dcdcdc"></div>
<div style="left:1066.6px;top:624.59px;width:46.7px;height:6px;background:#b4c8e4"></div>
<div class="t" style="left:838.2px;width:220px;text-align:right;top:623px;font-size:8.5px;line-height:10.62px;color:#333;font-family:'Liberation Sans';transform:scaleY(1.1);transform-origin:0 8px;">Esposizione verso locale(TU2)-&nbsp; 1-Vano scala</div>
<div style="left:1062.8px;top:627.95px;width:3.5px;height:1px;background:#dcdcdc"></div>
<div style="left:1066.6px;top:635.32px;width:36.6px;height:6px;background:#f69645"></div>
<div class="t" style="left:838.2px;width:220px;text-align:right;top:634px;font-size:8.5px;line-height:10.62px;color:#333;font-family:'Liberation Sans';transform:scaleY(1.1);transform-origin:0 8px;">Est</div>
<div style="left:1062.8px;top:638.68px;width:3.5px;height:1px;background:#dcdcdc"></div>
<div style="left:1066.6px;top:646.05px;width:34.9px;height:6px;background:#43a6c4"></div>
<div class="t" style="left:838.2px;width:220px;text-align:right;top:644px;font-size:8.5px;line-height:10.62px;color:#333;font-family:'Liberation Sans';transform:scaleY(1.1);transform-origin:0 8px;">Ovest</div>
<div style="left:1062.8px;top:649.41px;width:3.5px;height:1px;background:#dcdcdc"></div>
<div style="left:1066.6px;top:656.78px;width:26.6px;height:6px;background:#7e62a8"></div>
<div class="t" style="left:838.2px;width:220px;text-align:right;top:655px;font-size:8.5px;line-height:10.62px;color:#333;font-family:'Liberation Sans';transform:scaleY(1.1);transform-origin:0 8px;">Tetto piano esterno</div>
<div style="left:1062.8px;top:660.14px;width:3.5px;height:1px;background:#dcdcdc"></div>
<div style="left:1066.6px;top:667.51px;width:18.0px;height:6px;background:#95bc55"></div>
<div class="t" style="left:838.2px;width:220px;text-align:right;top:666px;font-size:8.5px;line-height:10.62px;color:#333;font-family:'Liberation Sans';transform:scaleY(1.1);transform-origin:0 8px;">Balcone</div>
<div style="left:1062.8px;top:670.88px;width:3.5px;height:1px;background:#dcdcdc"></div>
<div style="left:1066.6px;top:678.24px;width:10.7px;height:6px;background:#c0504d"></div>
<div class="t" style="left:838.2px;width:220px;text-align:right;top:676px;font-size:8.5px;line-height:10.62px;color:#333;font-family:'Liberation Sans';transform:scaleY(1.1);transform-origin:0 8px;">Esposizione verso locale(TU1)-&nbsp; 4-Box 4</div>
<div style="left:1062.8px;top:681.61px;width:3.5px;height:1px;background:#dcdcdc"></div>
<div style="left:1066.6px;top:688.97px;width:10.7px;height:6px;background:#4f81bd"></div>
<div class="t" style="left:838.2px;width:220px;text-align:right;top:687px;font-size:8.5px;line-height:10.62px;color:#333;font-family:'Liberation Sans';transform:scaleY(1.1);transform-origin:0 8px;">Esposizione verso locale(TU1)-&nbsp; 1-Box 1</div>
<div style="left:1062.8px;top:692.34px;width:3.5px;height:1px;background:#dcdcdc"></div>
<div style="left:1066.6px;top:699.7px;width:10.7px;height:6px;background:#f7801f"></div>
<div class="t" style="left:838.2px;width:220px;text-align:right;top:698px;font-size:8.5px;line-height:10.62px;color:#333;font-family:'Liberation Sans';transform:scaleY(1.1);transform-origin:0 8px;">Esposizione verso locale(TU1)-&nbsp; 3-Box 3</div>
<div style="left:1062.8px;top:703.07px;width:3.5px;height:1px;background:#dcdcdc"></div>
<div style="left:1066.6px;top:710.43px;width:10.7px;height:6px;background:#4bacc6"></div>
<div class="t" style="left:838.2px;width:220px;text-align:right;top:709px;font-size:8.5px;line-height:10.62px;color:#333;font-family:'Liberation Sans';transform:scaleY(1.1);transform-origin:0 8px;">Esposizione verso locale(TU1)-&nbsp; 2-Box 2</div>
<div style="left:1062.8px;top:713.79px;width:3.5px;height:1px;background:#dcdcdc"></div>
<div style="left:1066.6px;top:721.16px;width:5.5px;height:6px;background:#6a4e9c"></div>
<div class="t" style="left:838.2px;width:220px;text-align:right;top:719px;font-size:8.5px;line-height:10.62px;color:#333;font-family:'Liberation Sans';transform:scaleY(1.1);transform-origin:0 8px;">Esposizione verso locale(43)-&nbsp; 4-Box 4-4</div>
<div style="left:1062.8px;top:724.52px;width:3.5px;height:1px;background:#dcdcdc"></div>
<div style="left:1066.6px;top:731.89px;width:5.5px;height:6px;background:#8db04a"></div>
<div class="t" style="left:838.2px;width:220px;text-align:right;top:730px;font-size:8.5px;line-height:10.62px;color:#333;font-family:'Liberation Sans';transform:scaleY(1.1);transform-origin:0 8px;">Esposizione verso locale(43)-&nbsp; 1-Box 4-1</div>
<div style="left:1062.8px;top:735.25px;width:3.5px;height:1px;background:#dcdcdc"></div>
<div style="left:1066.6px;top:742.62px;width:5.5px;height:6px;background:#b03030"></div>
<div class="t" style="left:838.2px;width:220px;text-align:right;top:741px;font-size:8.5px;line-height:10.62px;color:#333;font-family:'Liberation Sans';transform:scaleY(1.1);transform-origin:0 8px;">Esposizione verso locale(43)-&nbsp; 2-Box 4-2</div>
<div style="left:1062.8px;top:745.99px;width:3.5px;height:1px;background:#dcdcdc"></div>
<div style="left:1066.6px;top:753.35px;width:5.5px;height:6px;background:#3e6db0"></div>
<div class="t" style="left:838.2px;width:220px;text-align:right;top:752px;font-size:8.5px;line-height:10.62px;color:#333;font-family:'Liberation Sans';transform:scaleY(1.1);transform-origin:0 8px;">Esposizione verso locale(43)-&nbsp; 3-Box 4-3</div>
<div style="left:1062.8px;top:756.72px;width:3.5px;height:1px;background:#dcdcdc"></div>
<div style="left:1px;top:784.5px;width:1477px;height:1.2px;background:#b0a89c"></div>
<div style="left:1px;top:785.7px;width:1477px;height:16.3px;background:#116cbd"></div>
<div class="t" style="left:7.8px;top:790px;font-size:8px;line-height:10.0px;color:#fff;font-family:'Liberation Sans';transform:scaleY(1.1);transform-origin:0 7px;">Nessuna</div>
<div class="t" style="left:1337.2px;top:791px;font-size:8.2px;line-height:10.25px;color:#fff;font-family:'Liberation Sans';transform:scaleY(1.1);transform-origin:0 7px;">100%</div>
<div style="left:1371.4px;top:793.6px;width:5.6px;height:1px;background:#4d86c4"></div>
<div style="left:1381px;top:793.2px;width:38.5px;height:1.6px;background:#27598a"></div>
<div style="left:1423.2px;top:793.2px;width:39.3px;height:1.6px;background:#5b8fc8"></div>
<div style="left:1419.5px;top:789px;width:3.7px;height:9.7px;background:#c8c4be"></div>
<div style="left:1466.2px;top:793.6px;width:6.5px;height:1px;background:#4d86c4"></div>
<div style="left:1468.9px;top:791px;width:1px;height:6.2px;background:#4d86c4"></div>
<div style="left:0px;top:0px;width:1479px;height:1px;background:#5f5f5f"></div>
<div style="left:0px;top:0px;width:1px;height:803px;background:#7b7b7b"></div>
<div style="left:1478px;top:0px;width:1px;height:803px;background:#6a6a6a"></div>
<div style="left:0px;top:802px;width:1479px;height:1px;background:#8d8478"></div>
<div style="left:722px;top:0px;width:37px;height:1px;background:#8a8a8a"></div>
<div style="left:722px;top:1px;width:37px;height:1px;background:#2b5d9b"></div>
</body></html>
